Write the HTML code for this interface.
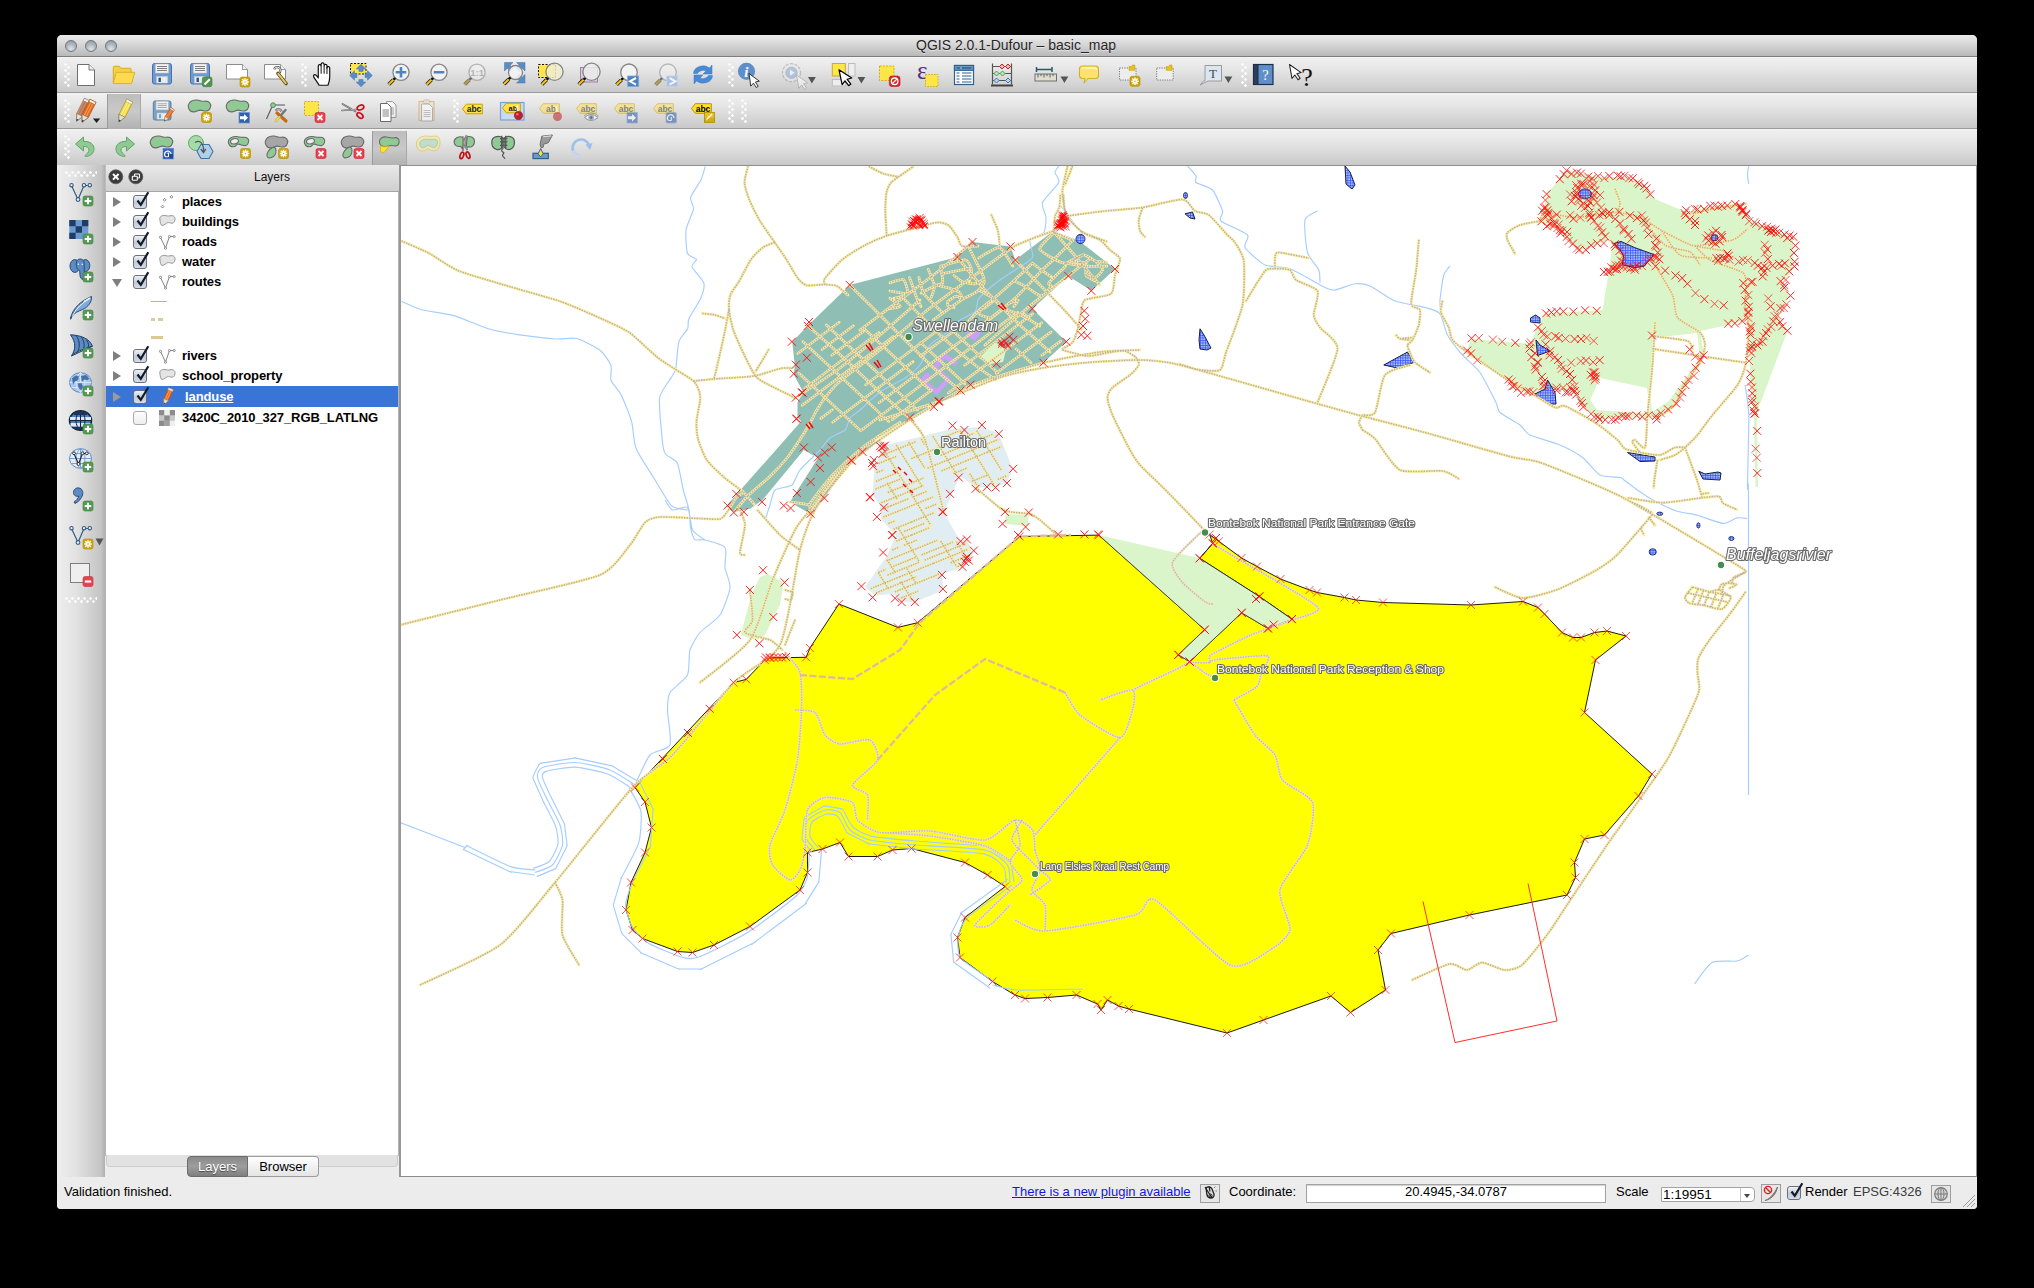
<!DOCTYPE html>
<html><head><meta charset="utf-8"><title>QGIS</title>
<style>
*{box-sizing:border-box;margin:0;padding:0}
html,body{width:2034px;height:1288px;background:#000;overflow:hidden}
body{font-family:"Liberation Sans",sans-serif;font-size:13px;color:#000;position:relative}
.abs{position:absolute}
#win{position:absolute;left:57px;top:35px;width:1920px;height:1174px;background:#ececec;border-radius:5px 5px 4px 4px;overflow:hidden}
#title{position:absolute;left:0;top:0;width:1920px;height:22px;background:linear-gradient(#ebebeb,#d6d6d6 45%,#b9b9b9);border-bottom:1px solid #7d7d7d;text-align:center;font-size:14px;line-height:21px;color:#262626;text-shadow:0 1px 0 rgba(255,255,255,.5)}
.tl{position:absolute;top:5px;width:12px;height:12px;border-radius:6px;background:radial-gradient(circle at 50% 80%,#dfe6ea 0,#b4bcc3 45%,#8d959c 100%);border:1px solid #6f767c}
.tb{position:absolute;left:0;width:1920px;height:36px;background:linear-gradient(#f0f0f0,#e7e7e7 30%,#d3d3d3 78%,#c9c9c9);border-bottom:1px solid #9a9a9a;border-top:1px solid #f4f4f4}
.grip{position:absolute;width:6px;height:24px;background-image:radial-gradient(circle at 1.5px 1.5px,#fbfbfb 1px,rgba(255,255,255,0) 1.6px),radial-gradient(circle at 4.5px 4.5px,#fbfbfb 1px,rgba(255,255,255,0) 1.6px);background-size:6px 6px}
.gripH{position:absolute;width:32px;height:6px;background-image:radial-gradient(circle at 1.5px 1.5px,#fbfbfb 1px,rgba(255,255,255,0) 1.6px),radial-gradient(circle at 4.5px 4.5px,#fbfbfb 1px,rgba(255,255,255,0) 1.6px);background-size:6px 6px}
.ic{position:absolute;width:24px;height:24px;overflow:visible}
.pressed{position:absolute;background:linear-gradient(#bdbdbd,#c9c9c9 50%,#b1b1b1);border-left:1px solid #9a9a9a;border-right:1px solid #a8a8a8}
#dock{position:absolute;left:0;top:130px;width:47.5px;height:1012px;background:linear-gradient(90deg,#eeeeee,#e2e2e2 40%,#c4c4c4 92%,#b0b0b0)}
#lhead{position:absolute;left:48px;top:130px;width:294px;height:27px;background:linear-gradient(#e9e9e9,#dcdcdc 50%,#cfcfcf);border-bottom:1px solid #a6a6a6;border-left:1px solid #bdbdbd;text-align:center;line-height:24px;font-size:12px;color:#111}
#tree{position:absolute;left:48px;top:157px;width:294px;height:964px;background:#fff;border-left:1px solid #b5b5b5;border-right:1px solid #b5b5b5;border-bottom:1px solid #b5b5b5}
.row{position:absolute;left:0;width:292px;height:20px}
.row .t{position:absolute;left:76px;top:2px;font-weight:bold;font-size:13px;line-height:16px;white-space:nowrap;color:#000;letter-spacing:-0.1px}
.arr{position:absolute;left:7px;top:5px;width:0;height:0;border-left:8px solid #7f7f7f;border-top:5px solid transparent;border-bottom:5px solid transparent}
.arrd{position:absolute;left:6px;top:7px;width:0;height:0;border-top:8px solid #7f7f7f;border-left:5px solid transparent;border-right:5px solid transparent}
.cb{position:absolute;left:27px;top:3px;width:14px;height:14px;border:1px solid #6b6f80;border-radius:3px;background:linear-gradient(#eef1f5,#c2ccd8 55%,#d5dee8)}
.cb.off{background:linear-gradient(#fdfdfd,#ededed);border-color:#a9a9a9}
.cb svg{position:absolute;left:1px;top:-5px;width:16px;height:17px;overflow:visible}
.li{position:absolute;left:53px;top:2px;width:18px;height:16px;overflow:visible}
#mapwrap{position:absolute;left:342px;top:130px;width:1578px;height:1012px;background:#fff;border:1px solid #8e8e8e;border-left:2px solid #979797;overflow:hidden}
#status{position:absolute;left:0;top:1142px;width:1920px;height:32px;background:#ececec;font-size:13px}
</style></head><body>
<div id="win">
<div id="title"><span style="position:relative;left:-1px">QGIS 2.0.1-Dufour – basic_map</span>
<div class="tl" style="left:8px"></div><div class="tl" style="left:28px"></div><div class="tl" style="left:48px"></div></div>
<div class="tb" style="top:22px"></div>
<div class="tb" style="top:58px"></div>
<div class="tb" style="top:94px;height:37px"></div>
<svg class="ic" style="left:17px;top:28px" viewBox="0 0 24 24"><path d="M3.5 1.5h11.5l5.5 5.5v15.5h-17z" fill="#fff" stroke="#6e6e6e"/><path d="M15 1.5v5.5h5.5" fill="#ececec" stroke="#6e6e6e" stroke-width=".9"/></svg>
<svg class="ic" style="left:55px;top:28px" viewBox="0 0 24 24"><path d="M1.3 20V4.2q0-.9.9-.9h5.2l1.3 2h9.5q.9 0 .9.9v3.3" fill="#f5cf48" stroke="#d2ac2c"/><path d="M1.2 20.6l3-11.3h18.6l-3.2 11.3z" fill="#ffda50" stroke="#d8b230" stroke-linejoin="round"/></svg>
<svg class="ic" style="left:93px;top:28px" viewBox="0 0 24 24"><rect x="2.5" y=".5" width="19" height="20.5" rx="2" fill="#6d9bd0" stroke="#4673ad"/><rect x="5.5" y="1" width="13" height="9" fill="#f2f2f2" stroke="#c9c9c9" stroke-width=".6"/><path d="M7 3.5h10M7 5.5h10M7 7.5h10" stroke="#6f6f6f" stroke-width=".9"/><rect x="6.5" y="13.5" width="11" height="6.5" fill="#ebebeb" stroke="#c4cbd6" stroke-width=".5"/><rect x="8.5" y="14.7" width="2.4" height="4.3" fill="#2d4f83"/></svg>
<svg class="ic" style="left:131px;top:28px" viewBox="0 0 24 24"><rect x="2.5" y=".5" width="19" height="20.5" rx="2" fill="#6d9bd0" stroke="#4673ad"/><rect x="5.5" y="1" width="13" height="9" fill="#f2f2f2" stroke="#c9c9c9" stroke-width=".6"/><path d="M7 3.5h10M7 5.5h10M7 7.5h10" stroke="#6f6f6f" stroke-width=".9"/><rect x="6.5" y="13.5" width="11" height="6.5" fill="#ebebeb" stroke="#c4cbd6" stroke-width=".5"/><rect x="8.5" y="14.7" width="2.4" height="4.3" fill="#2d4f83"/><rect x="14.3" y="14" width="9.7" height="9.7" rx="2" fill="#4e9650" stroke="#3c7a3e" stroke-width=".6"/><path d="M16.5 21.5l5.3 -5.3" stroke="#fff" stroke-width="2"/></svg>
<svg class="ic" style="left:169px;top:28px" viewBox="0 0 24 24"><path d="M.5 1.5h16l5 5v9.5h-21z" fill="#fff" stroke="#8c8c8c"/><path d="M16.5 1.5v5h5" fill="#f3f3f3" stroke="#8c8c8c" stroke-width=".9"/><rect x="14" y="14" width="10" height="10" rx="2" fill="#cfa60a" stroke="#b08c00" stroke-width=".6"/><path d="M19 15.3V22.7M15.3 19H22.7M16.3 16.3L21.7 21.7M16.3 21.7L21.7 16.3" stroke="#fff" stroke-width="1.45"/><circle cx="19" cy="19" r=".75" fill="#cfa60a"/></svg>
<svg class="ic" style="left:207px;top:28px" viewBox="0 0 24 24"><path d="M.5 1.5h16l5 5v9.5h-21z" fill="#fff" stroke="#8c8c8c"/><path d="M16.5 1.5v5h5" fill="#f3f3f3" stroke="#8c8c8c" stroke-width=".9"/><path d="M10.2 6.3a3.2 3.2 0 1 1 3.4 4.2" fill="none" stroke="#555" stroke-width="2.2"/><path d="M10.2 6.3a3.2 3.2 0 1 1 3.4 4.2" fill="none" stroke="#f2f2f2" stroke-width="1"/><path d="M14 10.5l8 10" stroke="#5a4a1a" stroke-width="3.6" stroke-linecap="round"/><path d="M14.3 10.9l7.4 9.3" stroke="#e6c85a" stroke-width="2" stroke-linecap="round"/></svg>
<svg class="ic" style="left:255px;top:28px" viewBox="0 0 24 24"><g transform="translate(-1.2 -1.4) scale(1.1)"><path d="M7.5 21.5c-1.5-3-4.5-6.5-5-8c-.4-1.4 1.2-2.2 2.4-1l1.9 2.2V4.2c0-1.9 2.6-1.9 2.6 0V2.6c0-1.9 2.7-1.9 2.7 0v1.2c0-1.8 2.6-1.8 2.6 0v2c0-1.7 2.5-1.7 2.5 0v8.5c0 3-.8 5-1.6 7.2z" fill="#fff" stroke="#111" stroke-width="1.1" stroke-linejoin="round"/><path d="M9.4 4.5v6.5M12.1 4v7M14.7 5v6.3" stroke="#111" stroke-width=".9"/></g></svg>
<svg class="ic" style="left:292px;top:28px" viewBox="0 0 24 24"><rect x="1.5" y=".5" width="15.5" height="10.5" fill="#ffe648" stroke="#111" stroke-dasharray="2 1.5"/><path d="M12 1.2l4.8 4.8h-2.7v2.5h-4.2v-2.5h-2.7z" fill="#5b8cc6" stroke="#4377b4" stroke-width=".5" transform="rotate(0 12 12.5)"/><path d="M12 1.2l4.8 4.8h-2.7v2.5h-4.2v-2.5h-2.7z" fill="#5b8cc6" stroke="#4377b4" stroke-width=".5" transform="rotate(90 12 12.5)"/><path d="M12 1.2l4.8 4.8h-2.7v2.5h-4.2v-2.5h-2.7z" fill="#5b8cc6" stroke="#4377b4" stroke-width=".5" transform="rotate(180 12 12.5)"/><path d="M12 1.2l4.8 4.8h-2.7v2.5h-4.2v-2.5h-2.7z" fill="#5b8cc6" stroke="#4377b4" stroke-width=".5" transform="rotate(270 12 12.5)"/></svg>
<svg class="ic" style="left:329px;top:28px" viewBox="0 0 24 24"><path d="M2.6724900000000016 21.52751L7.472490000000001 16.72751" stroke="#222" stroke-width="3.8" stroke-linecap="butt" opacity="1"/><path d="M2.6724900000000016 21.52751L7.472490000000001 16.72751" stroke="#f5c518" stroke-width="2" stroke-linecap="butt" opacity="1"/><circle cx="15" cy="9.2" r="8.1" fill="#f4f4f4" fill-opacity=".85" stroke="#858585" stroke-width="1.3" opacity="1"/><circle cx="8.37249" cy="15.827509999999998" r="1.4" fill="#111" opacity="1"/><path d="M15 3.9v10.6M9.7 9.2h10.6" stroke="#4f83c1" stroke-width="2.6"/></svg>
<svg class="ic" style="left:367px;top:28px" viewBox="0 0 24 24"><path d="M2.6724900000000016 21.52751L7.472490000000001 16.72751" stroke="#222" stroke-width="3.8" stroke-linecap="butt" opacity="1"/><path d="M2.6724900000000016 21.52751L7.472490000000001 16.72751" stroke="#f5c518" stroke-width="2" stroke-linecap="butt" opacity="1"/><circle cx="15" cy="9.2" r="8.1" fill="#f4f4f4" fill-opacity=".85" stroke="#858585" stroke-width="1.3" opacity="1"/><circle cx="8.37249" cy="15.827509999999998" r="1.4" fill="#111" opacity="1"/><path d="M9.7 9.2h10.6" stroke="#4f83c1" stroke-width="2.6"/></svg>
<svg class="ic" style="left:405px;top:28px" viewBox="0 0 24 24"><path d="M2.6724900000000016 21.52751L7.472490000000001 16.72751" stroke="#222" stroke-width="3.8" stroke-linecap="butt" opacity="0.55"/><path d="M2.6724900000000016 21.52751L7.472490000000001 16.72751" stroke="#f5c518" stroke-width="2" stroke-linecap="butt" opacity="0.55"/><circle cx="15" cy="9.2" r="8.1" fill="#f4f4f4" fill-opacity=".85" stroke="#858585" stroke-width="1.3" opacity="0.55"/><circle cx="8.37249" cy="15.827509999999998" r="1.4" fill="#111" opacity="0.55"/><text x="15.1" y="12.6" font-family="Liberation Sans" font-weight="bold" font-size="9.5" text-anchor="middle" fill="#b3b3b3">1:1</text></svg>
<svg class="ic" style="left:444px;top:28px" viewBox="0 0 24 24"><path d="M3.5 -.5h8.5l-2.8 2.8 3 3-2.9 2.9-3-3-2.8 2.8zM24 -.5v8.5l-2.8-2.8-3 3-2.9-2.9 3-3-2.8-2.8zM24 20v-8.5l-2.8 2.8-3-3-2.9 2.9 3 3-2.8 2.8z" fill="#5b8cc6" stroke="#3f72b0" stroke-width=".5"/><path d="M2.9503000000000004 21.0497L7.7503 16.2497" stroke="#222" stroke-width="3.8" stroke-linecap="butt" opacity="1"/><path d="M2.9503000000000004 21.0497L7.7503 16.2497" stroke="#f5c518" stroke-width="2" stroke-linecap="butt" opacity="1"/><circle cx="14.5" cy="9.5" r="7" fill="#f4f4f4" fill-opacity=".85" stroke="#858585" stroke-width="1.3" opacity="1"/><circle cx="8.6503" cy="15.3497" r="1.4" fill="#111" opacity="1"/></svg>
<svg class="ic" style="left:482px;top:28px" viewBox="0 0 24 24"><rect x="-.5" y="1.5" width="17" height="13" fill="#ffe648" stroke="#111" stroke-dasharray="2 1.5"/><path d="M2.8189400000000013 21.48106L7.618940000000001 16.68106" stroke="#222" stroke-width="3.8" stroke-linecap="butt" opacity="1"/><path d="M2.8189400000000013 21.48106L7.618940000000001 16.68106" stroke="#f5c518" stroke-width="2" stroke-linecap="butt" opacity="1"/><circle cx="15.5" cy="8.8" r="8.6" fill="#efeccf" fill-opacity=".85" stroke="#858585" stroke-width="1.3" opacity="1"/><circle cx="8.51894" cy="15.78106" r="1.4" fill="#111" opacity="1"/></svg>
<svg class="ic" style="left:519px;top:28px" viewBox="0 0 24 24"><rect x="4.5" y="4.5" width="17" height="14.5" fill="#d9c9dc" stroke="#9b879e"/><path d="M2.8189400000000013 21.48106L7.618940000000001 16.68106" stroke="#222" stroke-width="3.8" stroke-linecap="butt" opacity="1"/><path d="M2.8189400000000013 21.48106L7.618940000000001 16.68106" stroke="#f5c518" stroke-width="2" stroke-linecap="butt" opacity="1"/><circle cx="15.5" cy="8.8" r="8.6" fill="#ececec" fill-opacity=".85" stroke="#858585" stroke-width="1.3" opacity="1"/><circle cx="8.51894" cy="15.78106" r="1.4" fill="#111" opacity="1"/></svg>
<svg class="ic" style="left:557px;top:28px" viewBox="0 0 24 24"><path d="M2.5310700000000015 21.768929999999997L7.331070000000001 16.96893" stroke="#222" stroke-width="3.8" stroke-linecap="butt" opacity="1"/><path d="M2.5310700000000015 21.768929999999997L7.331070000000001 16.96893" stroke="#f5c518" stroke-width="2" stroke-linecap="butt" opacity="1"/><circle cx="15" cy="9.3" r="8.3" fill="#f4f4f4" fill-opacity=".85" stroke="#858585" stroke-width="1.3" opacity="1"/><circle cx="8.23107" cy="16.068929999999998" r="1.4" fill="#111" opacity="1"/><rect x="13.7" y="13" width="11" height="10.5" fill="#4c82c3" stroke="#7fa8d8" stroke-width=".8"/><path d="M22 15l-6 3.3 6 3.3" fill="none" stroke="#fff" stroke-width="2"/></svg>
<svg class="ic" style="left:596px;top:28px" viewBox="0 0 24 24"><path d="M2.5310700000000015 21.768929999999997L7.331070000000001 16.96893" stroke="#222" stroke-width="3.8" stroke-linecap="butt" opacity="0.5"/><path d="M2.5310700000000015 21.768929999999997L7.331070000000001 16.96893" stroke="#f5c518" stroke-width="2" stroke-linecap="butt" opacity="0.5"/><circle cx="15" cy="9.3" r="8.3" fill="#f4f4f4" fill-opacity=".85" stroke="#858585" stroke-width="1.3" opacity="0.5"/><circle cx="8.23107" cy="16.068929999999998" r="1.4" fill="#111" opacity="0.5"/><rect x="13.7" y="13" width="11" height="10.5" fill="#a9c0de" stroke="#c3d3e8" stroke-width=".8"/><path d="M16.5 15l6 3.3-6 3.3" fill="none" stroke="#eef3fa" stroke-width="2"/></svg>
<svg class="ic" style="left:634px;top:28px" viewBox="0 0 24 24"><path d="M2.5 10.5a9.5 8 0 0 1 16-5.5l2.5-3v9h-9l3-3a6 5 0 0 0-8.5 2.5z" fill="#4a8ad4" stroke="#3a78c0" stroke-width=".5"/><path d="M21.5 12.5a9.5 8 0 0 1-16 5.5l-2.5 3v-9h9l-3 3a6 5 0 0 0 8.5-2.5z" fill="#4a8ad4" stroke="#3a78c0" stroke-width=".5"/></svg>
<svg class="ic" style="left:681px;top:28px" viewBox="0 0 24 24"><circle cx="8.5" cy="8.3" r="8.2" fill="#5e8fcb" stroke="#4a7ab8" stroke-width=".6"/><text x="8.3" y="13.5" font-family="Liberation Serif" font-style="italic" font-weight="bold" font-size="15" text-anchor="middle" fill="#fff">i</text><g transform="translate(11 10.5) rotate(-8) scale(.95)"><path d="M0 0l0 13.5l3.2 -2.8l2.3 5l2.2 -1l-2.3 -4.9l4.2 -.3z" fill="#fff" stroke="#222" stroke-width="0.9" stroke-linejoin="round"/></g></svg>
<svg class="ic" style="left:724px;top:28px" viewBox="0 0 24 24"><g opacity=".5"><circle cx="10.5" cy="9.7" r="9" fill="#e9e9e9" stroke="#9a9a9a" stroke-dasharray="3.2 1.3" stroke-width="1.3"/><circle cx="10.5" cy="9.7" r="5.6" fill="#7da7da" stroke="#7b8fa8"/><path d="M9 6.8l4.7 2.9-4.7 2.9z" fill="#fff"/><g transform="translate(15.5 12) rotate(-10)"><path d="M0 0l0 13.5l3.2 -2.8l2.3 5l2.2 -1l-2.3 -4.9l4.2 -.3z" fill="#fff" stroke="#888" stroke-width="0.8" stroke-linejoin="round"/></g></g><path d="M27 14h7.8l-3.9 6.6z" fill="#555"/></svg>
<svg class="ic" style="left:775px;top:28px" viewBox="0 0 24 24"><rect x=".3" y=".5" width="13" height="12.5" fill="#ffe648" stroke="#c9ab28"/><rect x="16.5" y=".5" width="6.5" height="12.5" fill="#eee" stroke="#bdbdbd"/><rect x=".3" y="16.5" width="13" height="6.5" fill="#eee" stroke="#bdbdbd"/><g transform="translate(7 6.8) rotate(-12) scale(1.12)"><path d="M0 0l0 13.5l3.2 -2.8l2.3 5l2.2 -1l-2.3 -4.9l4.2 -.3z" fill="#fff" stroke="#000" stroke-width="1.1" stroke-linejoin="round"/></g><path d="M25.5 14h7.8l-3.9 6.6z" fill="#555"/></svg>
<svg class="ic" style="left:820px;top:28px" viewBox="0 0 24 24"><rect x="2.5" y="3" width="14.5" height="14.5" fill="#ffe648" stroke="#cfae1e" stroke-dasharray="2 1.3"/><rect x="12.3" y="13" width="10.7" height="10.5" rx="2.5" fill="#e0202e" stroke="#c01020" stroke-width=".6"/><circle cx="17.6" cy="18.3" r="3.3" fill="none" stroke="#fff" stroke-width="1.3"/><path d="M15.4 20.5l4.4-4.4" stroke="#fff" stroke-width="1.3"/></svg>
<svg class="ic" style="left:858px;top:28px" viewBox="0 0 24 24"><text x="7.2" y="15.8" font-family="Liberation Serif" font-size="25" text-anchor="middle" fill="#5b2f7a">ε</text><rect x="10.5" y="11.5" width="12.5" height="12" fill="#ffe648" stroke="#cfae1e" stroke-dasharray="1.6 1.2"/></svg>
<svg class="ic" style="left:895px;top:28px" viewBox="0 0 24 24"><rect x="2.5" y="2.5" width="19" height="19" fill="#fff" stroke="#2f5f8d" stroke-width="1.2"/><rect x="2.5" y="2.5" width="19" height="4.8" fill="#6fa0cf" stroke="#2f5f8d" stroke-width="1.2"/><path d="M4.5 5h3.5M10 5h9.5" stroke="#2f5f8d" stroke-width="1.5"/><path d="M4.5 10h3M10 10h9.5M4.5 13h3M10 13h9.5M4.5 16h3M10 16h9.5M4.5 19h3M10 19h9.5" stroke="#2f5f8d" stroke-width="1.1"/></svg>
<svg class="ic" style="left:933px;top:28px" viewBox="0 0 24 24"><path d="M2.5 .5v21M21.5 .5v21M1 22.5h22M2.5 3.5h19M2.5 10.5h19M2.5 17.5h19" stroke="#555" stroke-width="1.2" fill="none"/><path d="M1 22.5h22" stroke="#444" stroke-width="2"/><g stroke-width="1"><path d="M12 1l2.5 2.5-2.5 2.5-2.5-2.5zM18 1l2.5 2.5-2.5 2.5-2.5-2.5z" fill="#f7b6b6" stroke="#d02020"/><path d="M6.5 8l2.5 2.5-2.5 2.5-2.5-2.5zM12.5 8l2.5 2.5-2.5 2.5-2.5-2.5z" fill="#bfe3bf" stroke="#4da04d"/><path d="M6.5 15l2.5 2.5-2.5 2.5-2.5-2.5zM18 15l2.5 2.5-2.5 2.5-2.5-2.5z" fill="#bcd4ee" stroke="#3d78b8"/></g></svg>
<svg class="ic" style="left:977px;top:28px" viewBox="0 0 24 24"><path d="M2.5 6.5h15.5M2.5 4v5M18 4v5" stroke="#28557f" stroke-width="1.5" fill="none"/><rect x="1" y="11" width="21.5" height="7" fill="#dedfd0" stroke="#6f6f6f"/><path d="M4 11v3.5M7 11v2.2M10 11v3.5M13 11v2.2M16 11v3.5M19 11v2.2" stroke="#555" stroke-width=".9"/><path d="M26.5 13.5h7.8l-3.9 6.6z" fill="#555"/></svg>
<svg class="ic" style="left:1021px;top:28px" viewBox="0 0 24 24"><g transform="translate(0 1.5)"><path d="M4.5 1.5h13q3 0 3 3v6.5q0 3-3 3h-7.5l-4 4.5l1-4.5h-2.5q-3 0-3-3v-6.5q0-3 3-3z" fill="#fde36a" stroke="#d3b02c" stroke-width="1.1" stroke-linejoin="round"/><path d="M4 3.5h12q2 0 2.5 1.5" stroke="#fff5b8" stroke-width="1.5" fill="none" stroke-linecap="round"/></g></svg>
<svg class="ic" style="left:1061px;top:28px" viewBox="0 0 24 24"><rect x="1.5" y="5" width="16.5" height="12" fill="#ededed" stroke="#777" stroke-dasharray="1.2 1.2"/><path d="M11 3.6h2.5l.9-1.5h2.4v5.2h-5.8z" fill="#e8c21e" stroke="#c8a000" stroke-width=".6"/><rect x="12" y="13.3" width="10" height="10" rx="2" fill="#cfa60a" stroke="#b08c00" stroke-width=".6"/><path d="M17 14.600000000000001V22.0M13.3 18.3H20.7M14.3 15.600000000000001L19.7 21.0M14.3 21.0L19.7 15.600000000000001" stroke="#fff" stroke-width="1.45"/><circle cx="17" cy="18.3" r=".75" fill="#cfa60a"/></svg>
<svg class="ic" style="left:1096px;top:28px" viewBox="0 0 24 24"><rect x="3.7" y="5" width="16.5" height="12" fill="#ededed" stroke="#777" stroke-dasharray="1.2 1.2"/><path d="M13.2 3.6h2.5l.9-1.5h2.4v5.2h-5.8z" fill="#e8c21e" stroke="#c8a000" stroke-width=".6"/></svg>
<svg class="ic" style="left:1143px;top:28px" viewBox="0 0 24 24"><path d="M5 2.5h16.5v15.5h-13.5l-8 4l3.5-4h1.5z" fill="#dbe7f0" stroke="#9a9a9a" stroke-linejoin="round"/><text x="13" y="14.5" font-family="Liberation Serif" font-size="13" text-anchor="middle" fill="#444">T</text><path d="M24.5 13.5h7.8l-3.9 6.6z" fill="#555"/></svg>
<svg class="ic" style="left:1194px;top:28px" viewBox="0 0 24 24"><rect x="2.5" y="1.5" width="19.5" height="20" fill="#5e8fcb" stroke="#1f2f48" stroke-width="1.2"/><rect x="2.5" y="1.5" width="4.5" height="20" fill="#2c3e5c" stroke="#1f2f48"/><text x="14.5" y="16.5" font-family="Liberation Serif" font-size="14.5" text-anchor="middle" fill="#fff">?</text></svg>
<svg class="ic" style="left:1231px;top:28px" viewBox="0 0 24 24"><g transform="translate(1.5 1.5) rotate(-10) scale(1.05)"><path d="M0 0l0 13.5l3.2 -2.8l2.3 5l2.2 -1l-2.3 -4.9l4.2 -.3z" fill="#fff" stroke="#222" stroke-width="1" stroke-linejoin="round"/></g><text x="19" y="22.5" font-family="Liberation Serif" font-size="26" text-anchor="middle" fill="#111">?</text></svg>
<div class="grip" style="left:7px;top:28px;height:24px"></div>
<div class="grip" style="left:244px;top:28px;height:24px"></div>
<div class="grip" style="left:671px;top:28px;height:24px"></div>
<div class="grip" style="left:1184px;top:28px;height:24px"></div>
<div class="pressed" style="left:50px;top:59px;width:34px;height:35px"></div>
<svg class="ic" style="left:18px;top:64px" viewBox="0 0 24 24"><g transform="translate(7 11.5) rotate(27) scale(1)"><path d="M-3.4 -12h6.8v17l-3.4 7l-3.4-7z" fill="#c98a66" stroke="#9a7a6a" stroke-width=".7"/><path d="M-3.4 -12h6.8v2.6h-6.8z" fill="#f6f6f6" stroke="#9a7a6a" stroke-width=".6"/><path d="M-1.15 -9.4v14.4M1.15 -9.4v14.4" stroke="#b5764f" stroke-width="1.1"/><path d="M-3.4 5l3.4 7l3.4-7z" fill="#e6e0d6" stroke="#777" stroke-width=".6"/><path d="M-1.1 9.7l1.1 2.3l1.1-2.3z" fill="#333"/></g><g transform="translate(12.5 12.5) rotate(27) scale(1)"><path d="M-3.4 -12h6.8v17l-3.4 7l-3.4-7z" fill="#e8662a" stroke="#a8541e" stroke-width=".7"/><path d="M-3.4 -12h6.8v2.6h-6.8z" fill="#f6f6f6" stroke="#a8541e" stroke-width=".6"/><path d="M-1.15 -9.4v14.4M1.15 -9.4v14.4" stroke="#f2a040" stroke-width="1.1"/><path d="M-3.4 5l3.4 7l3.4-7z" fill="#e6e0d6" stroke="#777" stroke-width=".6"/><path d="M-1.1 9.7l1.1 2.3l1.1-2.3z" fill="#333"/></g><path d="M18 19.5h7.2l-3.6 4.5z" fill="#222"/></svg>
<svg class="ic" style="left:55px;top:64px" viewBox="0 0 24 24"><g transform="translate(12.3 12.3) rotate(27) scale(1)"><path d="M-3.4 -12h6.8v17l-3.4 7l-3.4-7z" fill="#f2d944" stroke="#a89a30" stroke-width=".7"/><path d="M-3.4 -12h6.8v2.6h-6.8z" fill="#f6f6f6" stroke="#a89a30" stroke-width=".6"/><path d="M-1.15 -9.4v14.4M1.15 -9.4v14.4" stroke="#fff08a" stroke-width="1.1"/><path d="M-3.4 5l3.4 7l3.4-7z" fill="#e6e0d6" stroke="#777" stroke-width=".6"/><path d="M-1.1 9.7l1.1 2.3l1.1-2.3z" fill="#333"/></g></svg>
<svg class="ic" style="left:93px;top:64px" viewBox="0 0 24 24"><g transform="translate(1 1.5) scale(.93)"><rect x="2.5" y=".5" width="19" height="20.5" rx="2" fill="#7aa3c6" stroke="#4f7a9d"/><rect x="5.5" y="1" width="13" height="9" fill="#f2f2f2" stroke="#c9c9c9" stroke-width=".6"/><path d="M7 3.5h10M7 5.5h10M7 7.5h10" stroke="#9a9a9a" stroke-width=".9"/><rect x="6.5" y="13.5" width="11" height="6.5" fill="#ebebeb" stroke="#c4cbd6" stroke-width=".5"/><rect x="8.5" y="14.7" width="2.4" height="4.3" fill="#7aa3c6"/></g><g transform="translate(18.5 16) rotate(33) scale(0.62)"><path d="M-3.4 -12h6.8v17l-3.4 7l-3.4-7z" fill="#e8662a" stroke="#a8541e" stroke-width=".7"/><path d="M-3.4 -12h6.8v2.6h-6.8z" fill="#f6f6f6" stroke="#a8541e" stroke-width=".6"/><path d="M-1.15 -9.4v14.4M1.15 -9.4v14.4" stroke="#f2a040" stroke-width="1.1"/><path d="M-3.4 5l3.4 7l3.4-7z" fill="#e6e0d6" stroke="#777" stroke-width=".6"/><path d="M-1.1 9.7l1.1 2.3l1.1-2.3z" fill="#333"/></g></svg>
<svg class="ic" style="left:131px;top:64px" viewBox="0 0 24 24"><path d="M1 10c-2.3-4.5 1.5-9.5 8-9c3.2 .3 4.3 1.7 7.5 1.2c4.3-.7 7 2.2 6 6c-.9 3.3-3.6 4.5-7 3.5c-2.6-.8-3.7-1-5.8 0c-3.4 1.7-7 1.7-8.7-1.7z" fill="#8fca94" stroke="#6a6a6a" stroke-width="1.1"/><rect x="13.5" y="13.5" width="10" height="10" rx="2" fill="#cfa60a" stroke="#b08c00" stroke-width=".6"/><path d="M18.5 14.8V22.2M14.8 18.5H22.2M15.8 15.8L21.2 21.2M15.8 21.2L21.2 15.8" stroke="#fff" stroke-width="1.45"/><circle cx="18.5" cy="18.5" r=".75" fill="#cfa60a"/></svg>
<svg class="ic" style="left:169px;top:64px" viewBox="0 0 24 24"><path d="M1 10c-2.3-4.5 1.5-9.5 8-9c3.2 .3 4.3 1.7 7.5 1.2c4.3-.7 7 2.2 6 6c-.9 3.3-3.6 4.5-7 3.5c-2.6-.8-3.7-1-5.8 0c-3.4 1.7-7 1.7-8.7-1.7z" fill="#8fca94" stroke="#6a6a6a" stroke-width="1.1"/><rect x="13" y="13.5" width="10.5" height="10.5" fill="#2f5fad" stroke="#6f95d0" stroke-width=".8"/><path d="M14 17.3h4v-2.3l4 3.8l-4 3.8v-2.3h-4z" fill="#fff"/></svg>
<svg class="ic" style="left:208px;top:64px" viewBox="0 0 24 24"><path d="M1.5 20l6-13.5" stroke="#555" stroke-width="1.1"/><path d="M8 6h12" stroke="#555" stroke-width="1.1"/><circle cx="8" cy="6.2" r="2.4" fill="#8fca94" stroke="#5a8a5e"/><path d="M10.5 12c2-3 6-2 6 1" fill="none" stroke="#666" stroke-width="2.2"/><path d="M10.5 12c2-3 6-2 6 1" fill="none" stroke="#ddd" stroke-width=".9"/><path d="M12 14l9 8" stroke="#c86a10" stroke-width="3.2" stroke-linecap="round"/><path d="M20.5 11l-9.5 11" stroke="#777" stroke-width="2.4" stroke-linecap="round"/><path d="M14.5 18l-3.5 4" stroke="#e8de3a" stroke-width="2" stroke-linecap="round"/></svg>
<svg class="ic" style="left:246px;top:64px" viewBox="0 0 24 24"><rect x="1.5" y="2.5" width="14" height="14" fill="#ffe648" stroke="#cfae1e" stroke-dasharray="2 1.3"/><rect x="12" y="13.5" width="10" height="10" rx="2" fill="#e8414f" stroke="#c8202e" stroke-width=".6"/><path d="M14.5 16.0l5 5m0 -5l-5 5" stroke="#fff" stroke-width="1.8"/></svg>
<svg class="ic" style="left:284px;top:64px" viewBox="0 0 24 24"><path d="M1.5 5l13 7.5M1 11.5l14-1" stroke="#555" stroke-width="1.7" stroke-linecap="round"/><path d="M1.5 5l13 7.5M1 11.5l14-1" stroke="#d8d8d8" stroke-width=".6" stroke-linecap="round"/><ellipse cx="19.5" cy="8.5" rx="3.5" ry="2.2" transform="rotate(-25 19.5 8.5)" fill="none" stroke="#c81420" stroke-width="1.7"/><ellipse cx="19" cy="16.5" rx="3.5" ry="2.2" transform="rotate(40 19 16.5)" fill="none" stroke="#c81420" stroke-width="1.7"/></svg>
<svg class="ic" style="left:320px;top:64px" viewBox="0 0 24 24"><g opacity=".6"><path d="M9.5 2.5h6l3.5 3.5v12.5h-9.5z" fill="#fff" stroke="#6a6a6a" stroke-width="1"/><path d="M11.5 9.0h5.5M11.5 11.0h5.5M11.5 13.0h5.5M11.5 15.0h5.5" stroke="#777" stroke-width=".9"/></g><path d="M3.5 4.5h7l3.5 3.5v14.5h-10.5z" fill="#fff" stroke="#6a6a6a" stroke-width="1"/><path d="M5.5 11.0h6.5M5.5 13.0h6.5M5.5 15.0h6.5M5.5 17.0h6.5" stroke="#777" stroke-width=".9"/></svg>
<svg class="ic" style="left:359px;top:64px" viewBox="0 0 24 24"><g opacity=".55"><rect x="3" y="2.5" width="15" height="19" fill="#f0dcc4" stroke="#c89a5a" stroke-width="1.1"/><rect x="7.5" y="1" width="6" height="3.5" rx="1" fill="#ead6bc" stroke="#c89a5a"/><path d="M5.5 5h7.5l3.5 3.5v13.5h-11.0z" fill="#fff" stroke="#8a8a8a" stroke-width="1"/><path d="M7.5 11.5h7.0M7.5 13.5h7.0M7.5 15.5h7.0M7.5 17.5h7.0" stroke="#999" stroke-width=".9"/></g></svg>
<svg class="ic" style="left:405px;top:64px" viewBox="0 0 24 24"><path d="M0.5 10l3.8-4.8h16v9.6h-16z" fill="#ffe24a" stroke="#c8a000" stroke-width="1" stroke-linejoin="round"/><text x="12.0" y="13" font-family="Liberation Sans" font-weight="bold" font-size="8.5" text-anchor="middle" fill="#222">abc</text></svg>
<svg class="ic" style="left:444px;top:64px" viewBox="0 0 24 24"><rect x="-.5" y="3.5" width="23.5" height="17.5" fill="#c9d9ee" stroke="#79a3dc" stroke-width="1.2"/><path d="M1.5 9l3.8-4.8h14v9.6h-14z" fill="#ffe24a" stroke="#c8a000" stroke-width="1" stroke-linejoin="round"/><text x="12.0" y="12" font-family="Liberation Sans" font-weight="bold" font-size="7.5" text-anchor="middle" fill="#222">ab</text><path d="M16 7.5l1.5 7" stroke="#eee" stroke-width="1.8" stroke-linecap="round"/><circle cx="17.5" cy="16.5" r="4.2" fill="#c0202c" stroke="#8a1018" stroke-width=".5"/><circle cx="16.3" cy="15.2" r="1.2" fill="#e8707a"/></svg>
<svg class="ic" style="left:482px;top:64px" viewBox="0 0 24 24"><g opacity="0.5"><path d="M0.5 9.5l3.8-4.8h16v9.6h-16z" fill="#ffe24a" stroke="#c8a000" stroke-width="1" stroke-linejoin="round"/><text x="12.0" y="12.5" font-family="Liberation Sans" font-weight="bold" font-size="8.5" text-anchor="middle" fill="#222">ab</text></g><g opacity=".55"><path d="M17 8l1 7" stroke="#fff" stroke-width="1.8" stroke-linecap="round"/><circle cx="18.5" cy="17.5" r="4.5" fill="#c0202c"/></g></svg>
<svg class="ic" style="left:519px;top:64px" viewBox="0 0 24 24"><g opacity="0.5"><path d="M0.5 9.5l3.8-4.8h16v9.6h-16z" fill="#ffe24a" stroke="#c8a000" stroke-width="1" stroke-linejoin="round"/><text x="12.0" y="12.5" font-family="Liberation Sans" font-weight="bold" font-size="8.5" text-anchor="middle" fill="#222">abc</text></g><g opacity=".6"><path d="M8.5 18.5q6.5-6 13.5 0q-7 6-13.5 0z" fill="#fff" stroke="#555" stroke-width=".9"/><circle cx="15.2" cy="18.5" r="2.8" fill="#6a9ad8"/><circle cx="15.2" cy="18.5" r="1.2" fill="#222"/><path d="M8 17q7-6.5 14.5 0" fill="none" stroke="#666" stroke-width=".8"/></g></svg>
<svg class="ic" style="left:557px;top:64px" viewBox="0 0 24 24"><g opacity="0.5"><path d="M0.5 9.5l3.8-4.8h16v9.6h-16z" fill="#ffe24a" stroke="#c8a000" stroke-width="1" stroke-linejoin="round"/><text x="12.0" y="12.5" font-family="Liberation Sans" font-weight="bold" font-size="8.5" text-anchor="middle" fill="#222">abc</text></g><g opacity=".55"><rect x="13" y="13.5" width="10.5" height="10.5" fill="#2f5fad" stroke="#6f95d0" stroke-width=".8"/><path d="M14 17.3h4v-2.3l4 3.8l-4 3.8v-2.3h-4z" fill="#fff"/></g></svg>
<svg class="ic" style="left:596px;top:64px" viewBox="0 0 24 24"><g opacity="0.5"><path d="M0.5 9.5l3.8-4.8h16v9.6h-16z" fill="#ffe24a" stroke="#c8a000" stroke-width="1" stroke-linejoin="round"/><text x="12.0" y="12.5" font-family="Liberation Sans" font-weight="bold" font-size="8.5" text-anchor="middle" fill="#222">abc</text></g><g opacity=".55"><rect x="13" y="13.5" width="10.5" height="10.5" rx="1.5" fill="#2f5fad" stroke="#6f95d0" stroke-width=".8"/><path d="M15.5 21.5a3.3 3.3 0 1 1 5.5-2.5" fill="none" stroke="#fff" stroke-width="1.2"/><path d="M18.3 18v3.5h-2.5" fill="none" stroke="#fff" stroke-width="1"/></g></svg>
<svg class="ic" style="left:634px;top:64px" viewBox="0 0 24 24"><path d="M0.5 9.5l3.8-4.8h16v9.6h-16z" fill="#ffe030" stroke="#b89400" stroke-width="1" stroke-linejoin="round"/><text x="12.0" y="12.5" font-family="Liberation Sans" font-weight="bold" font-size="8.5" text-anchor="middle" fill="#000">abc</text><rect x="13.5" y="13.5" width="10" height="10" fill="#d4ac10" stroke="#b08c00" stroke-width=".8"/><path d="M14 13.8h9.2v5l-9.2 0z" fill="#e8c83a" opacity=".7"/><path d="M21.5 15.5l-4.5 4.5l-2 1.5l1-2.5l4.5-4.5z" fill="#fff"/></svg>
<div class="grip" style="left:7px;top:64px;height:24px"></div>
<div class="grip" style="left:396px;top:64px;height:24px"></div>
<div class="grip" style="left:671px;top:64px;height:24px"></div>
<div class="grip" style="left:684px;top:64px;height:24px"></div>
<div class="pressed" style="left:315px;top:96px;width:35px;height:35px"></div>
<svg class="ic" style="left:17px;top:100px" viewBox="0 0 24 24"><path d="M1.5 9l8-7v4.3c7 0 10.5 3.2 10.5 7.7c0 4-3 6.5-7.5 7.5c-1.5.3-2-.5-1.2-1.3c1.5-1.5 3.7-2.7 3.7-5.2c0-2.5-2.5-3.5-5.5-3.5v4.5z" fill="#8fc993" stroke="#5fa565" stroke-width="1" stroke-linejoin="round"/></svg>
<svg class="ic" style="left:55px;top:100px" viewBox="0 0 24 24"><path d="M22.5 9l-8-7v4.3c-7 0-10.5 3.2-10.5 7.7c0 4 3 6.5 7.5 7.5c1.5.3 2-.5 1.2-1.3c-1.5-1.5-3.7-2.7-3.7-5.2c0-2.5 2.5-3.5 5.5-3.5v4.5z" fill="#8fc993" stroke="#5fa565" stroke-width="1" stroke-linejoin="round"/></svg>
<svg class="ic" style="left:93px;top:100px" viewBox="0 0 24 24"><path d="M1 10c-2.3-4.5 1.5-9.5 8-9c3.2 .3 4.3 1.7 7.5 1.2c4.3-.7 7 2.2 6 6c-.9 3.3-3.6 4.5-7 3.5c-2.6-.8-3.7-1-5.8 0c-3.4 1.7-7 1.7-8.7-1.7z" fill="#8fca94" stroke="#6a6a6a" stroke-width="1.1"/><rect x="13" y="13.5" width="10.5" height="10.5" fill="#1f4a9a" stroke="#6f95d0" stroke-width=".7"/><path d="M13.3 13.8h9.9v5.2h-9.9z" fill="#3a68b8"/><path d="M15.8 22a3.3 3.3 0 1 1 5.3-3" fill="none" stroke="#fff" stroke-width="1.2"/><path d="M18.5 18v3.8h-2.8" fill="none" stroke="#fff" stroke-width="1"/><circle cx="18.3" cy="18.3" r=".9" fill="#fff"/></svg>
<svg class="ic" style="left:131px;top:100px" viewBox="0 0 24 24"><circle cx="8" cy="8" r="7.5" fill="#a4dba6" stroke="#6aa86e"/><path d="M13 9.5l8 0l4 7l-4 7h-8l-4-7z" fill="#b0d0ea" stroke="#3f74a6" stroke-width="1.1" stroke-linejoin="round"/><path d="M7 7.5c5-3 9 1 8.5 9" fill="none" stroke="#555" stroke-width="1.3"/><path d="M12.8 14l2.7 3.5l2.3-3.7" fill="none" stroke="#555" stroke-width="1.3"/></svg>
<svg class="ic" style="left:170px;top:100px" viewBox="0 0 24 24"><path d="M1.5 8c-1-4 3-7 8-6.5c3 .3 4.5 1 7 .8c4-.3 6 2 5 5c-.8 2.5-3 3.8-6 3c-2-.5-3-1.8-5-1c-1.5.6-1.5 2.3-4 2.5c-2.5.2-4.3-1.5-5-3.8z" fill="#8fca94" stroke="#6a6a6a" stroke-width="1.1"/><ellipse cx="7.5" cy="6.3" rx="4" ry="2.6" transform="rotate(-12 7.5 6.3)" fill="#ececec" stroke="#6a6a6a" stroke-width="1.1"/><rect x="13.5" y="13.5" width="10" height="10" rx="2" fill="#cfa60a" stroke="#b08c00" stroke-width=".6"/><path d="M18.5 14.8V22.2M14.8 18.5H22.2M15.8 15.8L21.2 21.2M15.8 21.2L21.2 15.8" stroke="#fff" stroke-width="1.45"/><circle cx="18.5" cy="18.5" r=".75" fill="#cfa60a"/></svg>
<svg class="ic" style="left:208px;top:100px" viewBox="0 0 24 24"><path d="M1 10c-2.3-4.5 1.5-9.5 8-9c3.2 .3 4.3 1.7 7.5 1.2c4.3-.7 7 2.2 6 6c-.9 3.3-3.6 4.5-7 3.5c-2.6-.8-3.7-1-5.8 0c-3.4 1.7-7 1.7-8.7-1.7z" fill="#a6a6a6" stroke="#6a6a6a" stroke-width="1.1"/><path d="M2 21c-.5-3 2-7 5.5-8.5c2-.8 3.5.5 3.5 3c0 3-1.5 6-4.5 7c-2.5.8-4.2.2-4.5-1.5z" fill="#8fca94" stroke="#6a6a6a" stroke-width="1.1"/><rect x="13.5" y="13.5" width="10" height="10" rx="2" fill="#cfa60a" stroke="#b08c00" stroke-width=".6"/><path d="M18.5 14.8V22.2M14.8 18.5H22.2M15.8 15.8L21.2 21.2M15.8 21.2L21.2 15.8" stroke="#fff" stroke-width="1.45"/><circle cx="18.5" cy="18.5" r=".75" fill="#cfa60a"/></svg>
<svg class="ic" style="left:246px;top:100px" viewBox="0 0 24 24"><path d="M1.5 8c-1-4 3-7 8-6.5c3 .3 4.5 1 7 .8c4-.3 6 2 5 5c-.8 2.5-3 3.8-6 3c-2-.5-3-1.8-5-1c-1.5.6-1.5 2.3-4 2.5c-2.5.2-4.3-1.5-5-3.8z" fill="#8fca94" stroke="#6a6a6a" stroke-width="1.1"/><ellipse cx="7.5" cy="6.3" rx="4" ry="2.6" transform="rotate(-12 7.5 6.3)" fill="#ececec" stroke="#6a6a6a" stroke-width="1.1"/><rect x="13" y="13.5" width="10" height="10" rx="2" fill="#e8414f" stroke="#c8202e" stroke-width=".6"/><path d="M15.5 16.0l5 5m0 -5l-5 5" stroke="#fff" stroke-width="1.8"/></svg>
<svg class="ic" style="left:284px;top:100px" viewBox="0 0 24 24"><path d="M1 10c-2.3-4.5 1.5-9.5 8-9c3.2 .3 4.3 1.7 7.5 1.2c4.3-.7 7 2.2 6 6c-.9 3.3-3.6 4.5-7 3.5c-2.6-.8-3.7-1-5.8 0c-3.4 1.7-7 1.7-8.7-1.7z" fill="#a6a6a6" stroke="#6a6a6a" stroke-width="1.1"/><path d="M2 21c-.5-3 2-7 5.5-8.5c2-.8 3.5.5 3.5 3c0 3-1.5 6-4.5 7c-2.5.8-4.2.2-4.5-1.5z" fill="#8fca94" stroke="#6a6a6a" stroke-width="1.1"/><rect x="13" y="13.5" width="10" height="10" rx="2" fill="#e8414f" stroke="#c8202e" stroke-width=".6"/><path d="M15.5 16.0l5 5m0 -5l-5 5" stroke="#fff" stroke-width="1.8"/></svg>
<svg class="ic" style="left:321px;top:100px" viewBox="0 0 24 24"><path d="M1.5 6.5c0-3 3-5 7-4.5c3 .4 4.5 1.5 7.5.8c3.5-.8 6 1.5 5 5c-.7 2.5-2.5 3.5-5 3c-2-.4-3-.6-5 0c-1.5.5-3 1.5-5.5.8c-2.5-.7-4-2.6-4-5.1z" fill="#8fca94" stroke="#6a6a6a" stroke-width="1.1"/><path d="M2.5 10.5c2.5 1.8 5 1.3 7.5.5l1-.2c-1.5 3-4 6.5-6.5 7c-1.8.2-2.3-4-2-7.3z" fill="#ffe22a" stroke="#c8a800" stroke-width=".7"/></svg>
<svg class="ic" style="left:359px;top:100px" viewBox="0 0 24 24"><g transform="translate(-.5 0) scale(1.04 1.12)"><g opacity=".75"><path d="M1 9c-1-5 4-8.5 10-8c3 .3 5 .3 7.5 0c4-.4 5.5 3 5 7c-.5 4-3.5 7-7.5 6c-2.5-.6-3.5-2.5-5.5-1c-2 1.5-4 1.8-6 1c-2-.8-3.1-2.5-3.5-5z" fill="#f6e89a" stroke="#d8c060" stroke-width=".8"/><path d="M4 8.5c-.5-3 2.5-5 7-4.7c3 .2 5 .3 7.5 0c2.5-.2 3 1.8 2.5 4c-.5 2.5-2 4-4.5 3.2c-2.5-.8-4-2.5-6.5-.8c-1.8 1.2-3 1.5-4 1c-1.2-.6-1.8-1.5-2-2.7z" fill="#b4dcc0" stroke="#9ab8a8" stroke-width=".8"/></g></g></svg>
<svg class="ic" style="left:397px;top:100px" viewBox="0 0 24 24"><g transform="translate(-1.5 -.5) scale(1.13)"><path d="M9.5 2.5c-4-1.5-8.5 1-8 4.5c.3 2.5 2.5 4 5 3.5c1.5-.3 2 1.5 2.5 3z" fill="#8fca94" stroke="#6a6a6a" stroke-width="1"/><path d="M13 2c3-.8 6.5.8 6.5 4c0 3-2 5.5-5 5c-1.2-.2-2 .5-2.5 1.5z" fill="#8fca94" stroke="#6a6a6a" stroke-width="1"/><path d="M12.5 .5l-3.5 14M9.5 2l3.5 12" stroke="#555" stroke-width="1.5"/><path d="M12.5 .5l-3.5 14M9.5 2l3.5 12" stroke="#ddd" stroke-width=".5"/><ellipse cx="8.3" cy="18.5" rx="1.5" ry="3" transform="rotate(20 8.3 18.5)" fill="none" stroke="#c01018" stroke-width="1.5"/><ellipse cx="13.7" cy="18.3" rx="1.5" ry="3" transform="rotate(-20 13.7 18.3)" fill="none" stroke="#c01018" stroke-width="1.5"/></g></svg>
<svg class="ic" style="left:435px;top:100px" viewBox="0 0 24 24"><g transform="translate(-1.8 -.5) scale(1.15)"><path d="M11 3c-3-2.5-9-1.5-9.5 2.5c-.5 3.5 1 6.5 4 7.5c2 .6 4-.5 5.5-2z" fill="#8fca94" stroke="#5a5a5a" stroke-width="1.1"/><path d="M12 3c3-2.5 8.5-1.5 9 2.5c.4 3.5-1 6.5-4 7.5c-2 .6-3.5-.5-5-2z" fill="#8fca94" stroke="#5a5a5a" stroke-width="1.1"/><path d="M10 1v11M13.5 1v11M8.5 3.5h6.5M8.5 6.5h6.5M8.5 9.5h6.5" stroke="#555" stroke-width="1.1"/><path d="M11.5 12c-3 2-1 3 0 3.5c1.5.8-2 2-.5 3.5l2 2" fill="none" stroke="#555" stroke-width="1.1"/></g></svg>
<svg class="ic" style="left:472px;top:100px" viewBox="0 0 24 24"><g transform="translate(-2.5 0) scale(1.18)"><path d="M13 1l9-1l-3.5 6.5l-4.5 1.5l.5 2l-2 1l-1-3z" fill="#9a9a9a" stroke="#666" stroke-width=".8"/><path d="M14 1.5l7-.8" stroke="#ddd" stroke-width="1"/><rect x="5.5" y="15.5" width="13" height="4.5" fill="#6a9ac8" stroke="#2f5f8d"/><path d="M12 11.5l2.2 4.5l-2.2 2.5l-2.2-2.5z" fill="#f2e24a" stroke="#2f5f8d" stroke-width=".8"/></g></svg>
<svg class="ic" style="left:511px;top:100px" viewBox="0 0 24 24"><g opacity=".8"><path d="M13 21.5a8.5 8.5 0 1 1 8-11.5" fill="none" stroke="#8fb6ee" stroke-width="2.6"/><path d="M17.5 9.5l7-1.5l-2.5 7z" fill="#8fb6ee"/><path d="M13 21.5a8.5 8.5 0 0 1-8-6" fill="none" stroke="#c4d8f6" stroke-width="2.6"/></g></svg>
<div class="grip" style="left:7px;top:100px;height:24px"></div><div id="dock"></div>
<div class="gripH" style="left:8px;top:136px"></div>
<div class="gripH" style="left:8px;top:562px"></div>
<svg class="ic" style="left:12px;top:146.5px" viewBox="0 0 24 24"><path d="M2.5 3.5l6.5 14l6-14h5.5" fill="none" stroke="#345c86" stroke-width="1.2" stroke-linejoin="round"/><circle cx="2.5" cy="3.2" r="1.7" fill="#ededed" stroke="#345c86" stroke-width="1.1"/><circle cx="15" cy="3.2" r="1.7" fill="#ededed" stroke="#345c86" stroke-width="1.1"/><circle cx="20.8" cy="3.2" r="1.7" fill="#ededed" stroke="#345c86" stroke-width="1.1"/><circle cx="9" cy="17.5" r="1.9" fill="#ededed" stroke="#345c86" stroke-width="1.1"/><rect x="14" y="14" width="10" height="10" rx="2" fill="#569a58" stroke="#42803f" stroke-width=".6"/><path d="M19 15.7v6.6M15.7 19h6.6" stroke="#fff" stroke-width="1.9"/></svg>
<svg class="ic" style="left:12px;top:185.0px" viewBox="0 0 24 24"><g transform="translate(-1.2 -1)"><rect x="1.5" y="1" width="19" height="19" fill="#6b9bd1"/><path d="M1.5 1h6.3v6.3h-6.3zM14.2 1h6.3v6.3h-6.3zM7.8 7.3h6.4v6.4h-6.4zM1.5 13.7h6.3v6.3h-6.3z" fill="#1f3c66"/></g><rect x="14" y="14" width="10" height="10" rx="2" fill="#569a58" stroke="#42803f" stroke-width=".6"/><path d="M19 15.7v6.6M15.7 19h6.6" stroke="#fff" stroke-width="1.9"/></svg>
<svg class="ic" style="left:12px;top:222.8px" viewBox="0 0 24 24"><g fill="#5d8cc4" stroke="#264a78" stroke-width="1"><ellipse cx="5.8" cy="8" rx="4.8" ry="6.4"/><ellipse cx="16.4" cy="7.6" rx="4.4" ry="6"/><path d="M7.2 5.5c0-6 8-6 8 0v6.5c0 2 .5 4 .2 6.2c-.2 1.500 1 1.500 2.3 1c.2 1.500-1.5 2.5-3.3 2.3c-2.5-.3-3.3-2-3.4-4.5l-.3-4.5c-2-.5-3.5-2.5-3.5-7z"/></g><circle cx="9.3" cy="6.2" r=".7" fill="#fff"/><circle cx="13.3" cy="6.2" r=".7" fill="#fff"/><rect x="14" y="14" width="10" height="10" rx="2" fill="#569a58" stroke="#42803f" stroke-width=".6"/><path d="M19 15.7v6.6M15.7 19h6.6" stroke="#fff" stroke-width="1.9"/></svg>
<svg class="ic" style="left:12px;top:261.0px" viewBox="0 0 24 24"><path d="M1.5 23c1-7 6-16 21-22.5c.5 5-3 10.5-9 13c-4 1.7-8 3-10.5 7z" fill="#7fa9dc" stroke="#264a78" stroke-width="1" stroke-linejoin="round"/><path d="M3 20c3-7 9-13 18-18" fill="none" stroke="#e8f0fb" stroke-width="1.6"/><path d="M1.5 23.5c1.5-6.5 6-13 13-18" fill="none" stroke="#264a78" stroke-width=".9"/><rect x="14" y="14" width="10" height="10" rx="2" fill="#569a58" stroke="#42803f" stroke-width=".6"/><path d="M19 15.7v6.6M15.7 19h6.6" stroke="#fff" stroke-width="1.9"/></svg>
<svg class="ic" style="left:12px;top:299.0px" viewBox="0 0 24 24"><path d="M1.5 .8c10 .5 19 3.5 22 11.5c-7 2-16 5-21 9.5c4-6 5-13-1-21z" fill="#5d8cc4" stroke="#1f3c66" stroke-width="1" stroke-linejoin="round"/><path d="M7.5 2c3.5 5 3.5 11 1 16.5M12.5 3.5c3 4 3.5 9 1.5 12.5M17.5 6c2 2.5 2.5 5.5 1.5 8" fill="none" stroke="#1f3c66" stroke-width="1"/><path d="M2.5 22l20-9.5" stroke="#1f3c66" stroke-width="1"/><rect x="14" y="14" width="10" height="10" rx="2" fill="#569a58" stroke="#42803f" stroke-width=".6"/><path d="M19 15.7v6.6M15.7 19h6.6" stroke="#fff" stroke-width="1.9"/></svg>
<svg class="ic" style="left:12px;top:337.0px" viewBox="0 0 24 24"><ellipse cx="11.5" cy="10.5" rx="11" ry="9.8" fill="#a9c6ea" stroke="#5d8cc4" stroke-width="1"/><path d="M.5 10.5h22M2.5 5.5h18M2.5 15.5h18M11.5 .7v19.6M11.5 .7c-6 3.5-6 16 0 19.6M11.5 .7c6 3.5 6 16 0 19.6" fill="none" stroke="#dce8f7" stroke-width=".9"/><path d="M3 6l4-2.5l3 1l-1 3.5l-3 1.5l-2 3zM12 4l5-1l3.5 3.5l-2 1.5l-3-.5l-2.5 2zM9 11.5l3.5-.5l1.5 4l-2 3.5l-2.5-3z" fill="#2f5f9a" opacity=".85"/><rect x="14" y="14" width="10" height="10" rx="2" fill="#569a58" stroke="#42803f" stroke-width=".6"/><path d="M19 15.7v6.6M15.7 19h6.6" stroke="#fff" stroke-width="1.9"/></svg>
<svg class="ic" style="left:12px;top:375.0px" viewBox="0 0 24 24"><ellipse cx="11.5" cy="10.5" rx="11" ry="9.8" fill="#4d7db8" stroke="#15233c" stroke-width="1.5"/><path d="M1 7h21v3h-21zM1.5 13h20v3.5h-20z" fill="#dce8f7"/><path d="M.5 10.5h22M11.5 .7v19.6M11.5 .7c-6 3.5-6 16 0 19.6M11.5 .7c6 3.5 6 16 0 19.6" fill="none" stroke="#15233c" stroke-width="1"/><path d="M4 2.5q7.5-3 15 0l-1 2.5h-13zM3.5 18q8 3.5 16 0l-1.5-1h-13z" fill="#1f3558"/><rect x="14" y="14" width="10" height="10" rx="2" fill="#569a58" stroke="#42803f" stroke-width=".6"/><path d="M19 15.7v6.6M15.7 19h6.6" stroke="#fff" stroke-width="1.9"/></svg>
<svg class="ic" style="left:12px;top:413.0px" viewBox="0 0 24 24"><ellipse cx="11.5" cy="10.5" rx="11" ry="9.8" fill="#e3edf8" stroke="#5d8cc4" stroke-width="1"/><path d="M.5 10.5h22M2.5 5.5h18M2.5 15.5h18M11.5 .7v19.6M11.5 .7c-6 3.5-6 16 0 19.6M11.5 .7c6 3.5 6 16 0 19.6" fill="none" stroke="#6c9ad2" stroke-width=".9"/><path d="M5 5.5l4.5 10.5l4-10.5h4" fill="none" stroke="#222" stroke-width="1.1"/><circle cx="5" cy="5.3" r="1.4" fill="#fff" stroke="#222" stroke-width=".9"/><circle cx="13.5" cy="5.3" r="1.4" fill="#fff" stroke="#222" stroke-width=".9"/><circle cx="17.8" cy="5.3" r="1.4" fill="#fff" stroke="#222" stroke-width=".9"/><circle cx="9.5" cy="16" r="1.5" fill="#fff" stroke="#222" stroke-width=".9"/><rect x="14" y="14" width="10" height="10" rx="2" fill="#569a58" stroke="#42803f" stroke-width=".6"/><path d="M19 15.7v6.6M15.7 19h6.6" stroke="#fff" stroke-width="1.9"/></svg>
<svg class="ic" style="left:12px;top:451.5px" viewBox="0 0 24 24"><path d="M4.5 5.5c0-3.5 3-5 5.5-4.5c3 .6 4.5 3.5 3.5 7c-1 3.5-3.5 6.5-7.5 8.5l-1-1.5c2.5-1.5 4.5-4 4.8-6c-2.5 1-5.3-.5-5.3-3.5z" fill="#5d8cc4" stroke="#264a78" stroke-width="1" stroke-linejoin="round"/><rect x="14" y="14" width="10" height="10" rx="2" fill="#569a58" stroke="#42803f" stroke-width=".6"/><path d="M19 15.7v6.6M15.7 19h6.6" stroke="#fff" stroke-width="1.9"/></svg>
<svg class="ic" style="left:12px;top:489.5px" viewBox="0 0 24 24"><path d="M2.5 3.5l6.5 14l6-14h5.5" fill="none" stroke="#345c86" stroke-width="1.2" stroke-linejoin="round"/><circle cx="2.5" cy="3.2" r="1.7" fill="#ededed" stroke="#345c86" stroke-width="1.1"/><circle cx="15" cy="3.2" r="1.7" fill="#ededed" stroke="#345c86" stroke-width="1.1"/><circle cx="20.8" cy="3.2" r="1.7" fill="#ededed" stroke="#345c86" stroke-width="1.1"/><circle cx="9" cy="17.5" r="1.9" fill="#ededed" stroke="#345c86" stroke-width="1.1"/><rect x="14" y="14" width="10" height="10" rx="2" fill="#cfa60a" stroke="#b08c00" stroke-width=".6"/><path d="M19 15.3V22.7M15.3 19H22.7M16.3 16.3L21.7 21.7M16.3 21.7L21.7 16.3" stroke="#fff" stroke-width="1.45"/><circle cx="19" cy="19" r=".75" fill="#cfa60a"/><path d="M26.5 13.5h8l-4 7z" fill="#555"/></svg>
<svg class="ic" style="left:12px;top:527.5px" viewBox="0 0 24 24"><rect x="1.5" y=".5" width="19" height="19" fill="#efefef" stroke="#7d7d7d"/><rect x="14" y="13.5" width="10" height="10" rx="2" fill="#e8414f" stroke="#c8303e" stroke-width=".6"/><path d="M15.8 18.5h6.4" stroke="#fff" stroke-width="2.2"/></svg>
<div id="lhead"><span style="position:absolute;left:136px;top:0;width:60px;text-align:center">Layers</span>
<svg style="position:absolute;left:2px;top:4px" width="40" height="16" viewBox="0 0 40 16"><circle cx="7.8" cy="7.8" r="7" fill="#3c3c3c" stroke="#5a5a5a" stroke-width=".8"/><path d="M5 5l5.6 5.6M10.6 5l-5.6 5.6" stroke="#fff" stroke-width="2"/><circle cx="27.8" cy="7.8" r="7" fill="#3c3c3c" stroke="#5a5a5a" stroke-width=".8"/><rect x="26.5" y="5" width="5" height="4" rx=".8" fill="none" stroke="#fff" stroke-width="1.1"/><rect x="24.3" y="7.3" width="5" height="4" rx=".8" fill="#3c3c3c" stroke="#fff" stroke-width="1.1"/></svg></div>
<div id="tree">
<div class="row" style="top:0.0px">
<div class="arr"></div>
<div class="cb"><svg viewBox="0 0 16 17"><path d="M2.5 9.5l3.3 4.3l7.5-12.6" fill="none" stroke="#141a2a" stroke-width="2.2" stroke-linejoin="miter"/></svg></div>
<svg class="li" viewBox="0 0 18 16"><g fill="#fff" stroke="#555" stroke-width=".7"><path d="M3.5 11.2l1.4 1.4-1.4 1.4-1.4-1.4zM5.5 4.4l1.4 1.4-1.4 1.4-1.4-1.4zM12.5 1.5l1.4 1.4-1.4 1.4-1.4-1.4z"/></g></svg>
<span class="t">places</span>
</div>
<div class="row" style="top:20.0px">
<div class="arr"></div>
<div class="cb"><svg viewBox="0 0 16 17"><path d="M2.5 9.5l3.3 4.3l7.5-12.6" fill="none" stroke="#141a2a" stroke-width="2.2" stroke-linejoin="miter"/></svg></div>
<svg class="li" viewBox="0 0 18 16"><path d="M1 6c-1-3 1.5-5 5-4.5c2 .3 3 .8 5 .3c3-.7 5.5.7 5 4c-.4 2.8-2 4-4.5 3.2c-1.5-.5-2.5-.7-4 .2c-2 1.2-3 2.5-4.5 2.2c-1.5-.3-1.7-3.2-2-5.4z" fill="#e4e4e4" stroke="#8c8c8c" stroke-width=".9"/></svg>
<span class="t">buildings</span>
</div>
<div class="row" style="top:40.0px">
<div class="arr"></div>
<div class="cb"><svg viewBox="0 0 16 17"><path d="M2.5 9.5l3.3 4.3l7.5-12.6" fill="none" stroke="#141a2a" stroke-width="2.2" stroke-linejoin="miter"/></svg></div>
<svg class="li" viewBox="0 0 18 16"><path d="M1.5 3.5l5 10.5l4-11.5h4.5" fill="none" stroke="#666" stroke-width=".8"/><g fill="#fff" stroke="#666" stroke-width=".7"><circle cx="1.5" cy="3.3" r="1.1"/><circle cx="10.5" cy="2.5" r="1.1"/><circle cx="15.2" cy="2.5" r="1.1"/><circle cx="6.5" cy="14.2" r="1.1"/></g></svg>
<span class="t">roads</span>
</div>
<div class="row" style="top:60.0px">
<div class="arr"></div>
<div class="cb"><svg viewBox="0 0 16 17"><path d="M2.5 9.5l3.3 4.3l7.5-12.6" fill="none" stroke="#141a2a" stroke-width="2.2" stroke-linejoin="miter"/></svg></div>
<svg class="li" viewBox="0 0 18 16"><path d="M1 6c-1-3 1.5-5 5-4.5c2 .3 3 .8 5 .3c3-.7 5.5.7 5 4c-.4 2.8-2 4-4.5 3.2c-1.5-.5-2.5-.7-4 .2c-2 1.2-3 2.5-4.5 2.2c-1.5-.3-1.7-3.2-2-5.4z" fill="#e4e4e4" stroke="#8c8c8c" stroke-width=".9"/></svg>
<span class="t">water</span>
</div>
<div class="row" style="top:80.0px">
<div class="arrd"></div>
<div class="cb"><svg viewBox="0 0 16 17"><path d="M2.5 9.5l3.3 4.3l7.5-12.6" fill="none" stroke="#141a2a" stroke-width="2.2" stroke-linejoin="miter"/></svg></div>
<svg class="li" viewBox="0 0 18 16"><path d="M1.5 3.5l5 10.5l4-11.5h4.5" fill="none" stroke="#666" stroke-width=".8"/><g fill="#fff" stroke="#666" stroke-width=".7"><circle cx="1.5" cy="3.3" r="1.1"/><circle cx="10.5" cy="2.5" r="1.1"/><circle cx="15.2" cy="2.5" r="1.1"/><circle cx="6.5" cy="14.2" r="1.1"/></g></svg>
<span class="t">routes</span>
</div>
<div class="row" style="top:154.0px">
<div class="arr"></div>
<div class="cb"><svg viewBox="0 0 16 17"><path d="M2.5 9.5l3.3 4.3l7.5-12.6" fill="none" stroke="#141a2a" stroke-width="2.2" stroke-linejoin="miter"/></svg></div>
<svg class="li" viewBox="0 0 18 16"><path d="M1.5 3.5l5 10.5l4-11.5h4.5" fill="none" stroke="#666" stroke-width=".8"/><g fill="#fff" stroke="#666" stroke-width=".7"><circle cx="1.5" cy="3.3" r="1.1"/><circle cx="10.5" cy="2.5" r="1.1"/><circle cx="15.2" cy="2.5" r="1.1"/><circle cx="6.5" cy="14.2" r="1.1"/></g></svg>
<span class="t">rivers</span>
</div>
<div class="row" style="top:174.0px">
<div class="arr"></div>
<div class="cb"><svg viewBox="0 0 16 17"><path d="M2.5 9.5l3.3 4.3l7.5-12.6" fill="none" stroke="#141a2a" stroke-width="2.2" stroke-linejoin="miter"/></svg></div>
<svg class="li" viewBox="0 0 18 16"><path d="M1 6c-1-3 1.5-5 5-4.5c2 .3 3 .8 5 .3c3-.7 5.5.7 5 4c-.4 2.8-2 4-4.5 3.2c-1.5-.5-2.5-.7-4 .2c-2 1.2-3 2.5-4.5 2.2c-1.5-.3-1.7-3.2-2-5.4z" fill="#e4e4e4" stroke="#8c8c8c" stroke-width=".9"/></svg>
<span class="t">school_property</span>
</div>
<div class="abs" style="left:0;top:194px;width:292px;height:21px;background:#3875d7"></div>
<div class="row" style="top:194.5px">
<div class="arr" style="border-left-color:#9a9a9a"></div>
<div class="cb"><svg viewBox="0 0 16 17"><path d="M2.5 9.5l3.3 4.3l7.5-12.6" fill="none" stroke="#141a2a" stroke-width="2.2" stroke-linejoin="miter"/></svg></div>
<svg class="li" viewBox="0 0 18 16"><g transform="translate(8.5 7.5) rotate(24)"><path d="M-2.6 -8.5h5.2v12l-2.6 5.5l-2.6-5.5z" fill="#e8662a" stroke="#a8541e" stroke-width=".6"/><path d="M-2.6 -8.5h5.2v2h-5.2z" fill="#f0f0f0" stroke="#999" stroke-width=".5"/><path d="M-.9 -6v9.5M.9 -6v9.5" stroke="#f2a040" stroke-width=".9"/><path d="M-2.6 3.5l2.6 5.5l2.6-5.5z" fill="#e6e0d6" stroke="#888" stroke-width=".5"/><path d="M-.9 7.1l.9 1.9l.9-1.9z" fill="#444"/></g></svg>
<span class="t" style="color:#fff;text-decoration:underline;left:79px">landuse</span>
</div>
<div class="row" style="top:216.0px">
<div class="cb off"></div>
<svg class="li" viewBox="0 0 18 16"><rect x="0" y="0" width="16" height="16" fill="#c8c8c8"/><path d="M0 0h5.3v5.3h-5.3zM10.7 0h5.3v5.3h-5.3zM5.3 5.3h5.4v5.4h-5.4zM0 10.7h5.3v5.3h-5.3z" fill="#8c8c8c"/><path d="M5.3 0h5.4v5.3h-5.4zM10.7 10.7h5.3v5.3h-5.3z" fill="#efefef"/><path d="M5.3 10.7h5.4v5.3h-5.4z" fill="#9f9f9f"/></svg>
<span class="t">3420C_2010_327_RGB_LATLNG</span>
</div>
<div class="abs" style="left:45px;top:109px;width:16px;height:1px;background:#f0a848"></div>
<div class="abs" style="left:45px;top:126px;width:3.5px;height:2.5px;background:#dccb9c"></div>
<div class="abs" style="left:52px;top:126px;width:4.5px;height:2.5px;background:#dccb9c"></div>
<div class="abs" style="left:45px;top:144px;width:11.5px;height:3px;background:#dcc98e"></div>
</div>
<div class="abs" style="left:49px;top:1120px;width:292px;height:12px;background:#e2e2e2;border:1px solid #cdcdcd;border-top:none;border-radius:0 0 4px 4px"></div>
<div class="abs" style="left:130px;top:1121px;width:61px;height:21px;border:1px solid #6c6c6c;border-radius:4px 0 0 4px;background:linear-gradient(#8a8a8a,#9d9d9d 50%,#7e7e7e);color:#fff;font-size:13px;line-height:19px;text-align:center;text-shadow:0 1px 1px #444">Layers</div>
<div class="abs" style="left:191px;top:1121px;width:71px;height:21px;border:1px solid #9c9c9c;border-left:none;border-radius:0 4px 4px 0;background:linear-gradient(#ffffff,#f1f1f1 50%,#e4e4e4);color:#000;font-size:13px;line-height:19px;text-align:center">Browser</div><div id="mapwrap"><svg width="1575" height="1010" viewBox="401 166 1575 1010" style="position:absolute;left:0;top:0">
<defs>
<pattern id="hatch" width="2.5" height="2.5" patternUnits="userSpaceOnUse"><rect width="2.5" height="2.5" fill="#a6c8ff"/><path d="M0 0.5H2.5M0.5 0V2.5" stroke="#2a3cff" stroke-width=".62"/></pattern>
<g id="X"><path d="M-4 -4L4 4M-4 4L4 -4"/></g>
<g id="Xs"><path d="M-3 -3L3 3M-3 3L3 -3"/></g>
</defs>
<style>.rd{fill:none;stroke-linecap:round;stroke-linejoin:round}.ra{stroke:#ffeb98;stroke-width:2.75}.rb{stroke:#b3b3b3;stroke-width:1.55;stroke-dasharray:1.45 1.1;stroke-linecap:butt}.ta{stroke:#ffeb98;stroke-width:2.6}.tb{stroke:#b3b3b3;stroke-width:1.45;stroke-dasharray:1.4 1.1;stroke-linecap:butt}.rv{fill:none;stroke:#a5cdff;stroke-width:1.15;stroke-linejoin:round}.xx{stroke:#ff0000;stroke-width:.95;fill:none;opacity:.92}.xl{stroke:#ff1010;stroke-width:.9;fill:none;opacity:.8}.lb{font-family:"Liberation Sans",sans-serif;fill:#fff;stroke:#6a6a6a;stroke-width:2.2px;paint-order:stroke;stroke-linejoin:round}.pt{fill:#468c4d;stroke:#fff;stroke-width:1.1}</style>
<polygon points="1560,179 1568.5,170.5 1595,177 1626,177 1647,188 1652.5,198 1686,212 1714,206 1739,206 1750,220 1757,223 1782,234 1793,239 1793,261 1791.6,272 1782,282 1789,297 1778,316 1787,334 1785,337.5 1757,412 1758,487 1755.5,487 1754,415 1750,385 1750,355 1747.5,320 1727.5,325 1700,331 1703.8,355 1695,372.5 1675,405 1657.5,417.5 1617.5,417.5 1600,420 1580,405 1575,390 1555,390 1535,393.8 1520,391 1507.5,380 1482.5,365 1467.5,350 1471,338.8 1530,343.8 1537.5,327.5 1545,313.8 1602.5,310 1610,265 1612.5,242.5 1607,240.7 1579.6,250.4 1557.5,229.7 1542.4,222.8 1543.8,207.7 1547.9,192.5" fill="#daf5c9"/>
<polygon points="1653,338 1697,333 1700,356 1690,372 1668,402 1652,412 1650,390" fill="#fff"/>
<polygon points="1600,378 1647,388 1650,412 1640,413 1597,410 1590,400" fill="#fff"/>
<polygon points="767.7,574 783.7,582.4 779.9,604.9 764.9,634.9 756.5,640.5 740.6,634.9 751.8,593.7 760.2,576.8" fill="#daf5c9"/>
<polygon points="1005.6,513.8 1028.8,515.6 1027.5,526.2 1005,523.8" fill="#daf5c9"/>
<polygon points="882.5,446 952.5,428.8 982.5,427 998.8,433.8 1012.5,468.8 1007,482.5 995,487.5 976,487.5 960,476 943.8,512.5 959.7,540.3 967.2,539.3 972.8,554.3 963.5,567.4 941.9,574 943.8,589.9 914.8,602.1 901.6,602.1 893.2,593.7 875.4,595.5 865.1,587.1 886.7,556.2 896,535.6 879.2,516.9 881,521 880,505 872.5,495 874.4,467.5" fill="#e0edf2"/>
<polygon points="849.7,284.9 957.5,256.9 972.5,242 1010.4,246.5 1015.4,259.9 1053.3,231 1079.3,241 1115.2,268.9 1091.3,290.8 1068.3,275.9 1032.4,308.8 1066.3,341.7 1043.4,362.7 970.5,384.7 938.6,401.6 906.2,421.2 875,440 850,461.2 825,497.5 810,513.8 790,501.9 818.1,458.1 803.8,450 762.5,500 750,508.8 733.8,511.9 726.2,506.2 801.2,421.2 797.5,417.5 797.5,402 803.5,392.5 793.8,374.7 794.8,365.7 792.3,341.7 807.8,325.8" fill="#8fbeb5"/>
<polygon points="979,358 995,342 1006,350 1003,362 990,364" fill="#daf5c9"/>
<polygon points="919,381 927,372 931,375 926,381 936,389 948,377 951,380 937,395" fill="#cc9ffa"/>
<polygon points="933,366 945,353 958,362 955,366 945,359 938,368 949,377 946,380" fill="#cc9ffa"/>
<polygon points="965,332 982,331 975,341 970,338" fill="#cc9ffa"/>
<polygon points="1098.8,535.1 1204.7,629.7 1178.4,654.8 1189.7,661.7 1241.7,612.8 1268,628.5 1291.9,619.1 1259.3,596.5 1199.7,558.3 1212.7,543.6 1209.7,534.5 1218.8,541.3 1241.5,558 1257,566.5 1280.5,579 1309.5,590 1317,592.5 1344.5,597.5 1356,600 1383,602.5 1471,605 1523,601.5 1538,607.5 1544.5,614 1562,632.5 1573,637.5 1581,637.5 1594.5,632.5 1607,631 1626,636 1595.5,660 1584.5,712.5 1652,774 1638.5,796 1604.5,835 1584.5,839 1574.5,862.5 1575.5,877.5 1567,895 1469.5,915 1391,933.5 1378,950 1385.5,990 1350.5,1012.5 1331,996 1263.5,1020 1227,1033 1129,1009 1118.5,1006 1107.5,1000 1101,1010 1097.5,1004 1076.5,995 1047.5,997.5 1025,998.5 1015,995 992.5,981.5 960,957.5 957.5,937.5 965,917.5 1005,886.5 987.5,875 965,862.5 911.5,848.5 892.5,850 877.5,856.5 848.5,856.5 840,842.5 822.5,849 807.5,852.5 807.5,872.5 800,890 750,926.5 714,945 692.5,952.5 677.5,951.5 642.5,938.5 632.5,930 626,910 631,882.5 645,852.5 651.5,827.5 645,802 635,787.5 733.5,682.6 746.2,679.4 764.9,660.1 769.6,657.9 806.1,657.3 809.9,648 838.9,604 897.9,627.4 917.6,622.7 1019.6,536.5" fill="#ffff00" stroke="#111" stroke-width=".95" stroke-linejoin="round"/>
<polygon points="1098.8,535.1 1199.7,558.3 1259.3,596.5 1291.9,619.1 1273.7,624.7 1268,628.5 1241.7,612.8 1189.7,661.7 1178.4,654.8 1204.7,629.7" fill="#daf5c9"/>
<path d="M1098.8 535.1 L1204.7 629.7 L1178.4 654.8 L1189.7 661.7 L1241.7 612.8 L1268 628.5" fill="none" stroke="#333" stroke-width=".7"/>
<path d="M1291.9 619.1 L1259.3 596.5 L1199.7 558.3 L1212.9 543.2" fill="none" stroke="#222" stroke-width=".9"/>
<path class="rv" d="M705.3 166.5C704.8 168 702.6 176.3 701 179.7C699.4 183.1 691.4 194.2 690.6 197.4C689.8 200.6 694 205.6 693.5 209.2C693 212.8 686.6 225.1 686 230C685.4 234.9 686.4 250.3 687.6 253.5C688.8 256.7 696 257.9 696.5 259.4C697 260.9 691.2 264.2 692 266.8C692.8 269.4 702.8 279.6 703.8 283C704.8 286.4 702.6 293.8 701 297.7C699.4 301.6 690.5 315 689 318.4C687.5 321.8 688.7 326.1 687.6 328.7C686.5 331.3 680.1 337.6 678.8 342C677.5 346.4 676.6 364.6 675.8 368.5C675 372.4 673.2 374.2 671.4 377.4C669.6 380.6 660.6 390.9 659.6 398C658.6 405.1 661.9 436.1 662.5 442.3C663.1 448.5 663.9 451.7 665.5 454C667.1 456.3 675.4 459.1 677.3 463C679.2 466.9 681.9 484.3 683.2 489.5C684.5 494.7 688.2 505.8 689 510C689.8 514.2 689.9 524.5 690.6 527.8C691.3 531.1 693.4 538.3 695 539.6C696.6 540.9 701.7 539.1 705 540C708.3 540.9 722.8 544.5 725 547.5C727.2 550.5 724.5 563.1 725 567.5C725.5 571.9 730.5 582.3 730 587.5C729.5 592.7 723.3 610 720 615C716.7 620 703.3 628.6 700 632.5C696.7 636.4 691.4 645.3 690 650C688.6 654.7 689.7 670.3 687.5 675C685.3 679.7 672.2 688.6 670 692.5C667.8 696.4 667.5 704.2 667.5 710C667.5 715.8 671.9 740 670 745C668.1 750 653.9 750.6 650 755C646.1 759.4 636.6 781.7 635 785 M665 500C665.8 501.1 670 509.2 672.5 510C675 510.8 685.3 505.3 687.5 507.5C689.7 509.7 690.6 526.4 692.5 530C694.4 533.6 703.6 538.9 705 540 M401.5 301.3C403.6 302.2 414.9 307.9 420.6 309.5C426.3 311.1 445.5 313.3 453 315.4C460.5 317.5 481.4 326.6 488.5 328.7C495.6 330.8 510.5 333.5 518 334.6C525.5 335.7 549.8 338.6 556.3 339C562.8 339.4 572.1 337.2 577 338.5C581.9 339.8 596.9 347.8 600.6 350.8C604.3 353.8 609.9 362.4 611 365.6C612.1 368.8 609.9 377.1 611 380.3C612.1 383.5 618.9 390.5 621.2 395C623.5 399.5 630 415.7 631.6 421.6C633.2 427.5 633.6 442 636 448.2C638.4 454.4 649.8 471.4 653.7 477.7C657.6 484 667.7 502.1 671.4 505.7C675.1 509.3 685.8 509.5 687.6 510 M1187.5 166C1188.4 167.1 1195.1 174.2 1196 176C1196.9 177.8 1194.2 181 1196 182.5C1197.8 184 1209.6 186.9 1212.5 190C1215.4 193.1 1221.6 207.6 1222.5 211C1223.4 214.4 1218.2 218.4 1221 221C1223.8 223.6 1244.9 232.1 1247.5 235C1250.1 237.9 1243.1 244.2 1245 247.5C1246.9 250.8 1260 262.7 1265 265C1270 267.3 1283.4 266.3 1290 268.8C1296.6 271.2 1320 285.2 1325 287.5C1330 289.8 1331.7 290.4 1335 290C1338.3 289.6 1351.2 284.2 1355 283.8C1358.8 283.3 1365.6 284.1 1370 286C1374.4 287.9 1389 298.6 1395 301C1401 303.4 1420 306.1 1425 307.5C1430 308.9 1437.5 310.7 1440 313.8C1442.5 316.8 1445 330.5 1447.5 335C1450 339.5 1458.9 350.9 1462.5 355C1466.1 359.1 1476.3 367.3 1480 372.5C1483.7 377.7 1493.8 398.1 1496 402.5C1498.2 406.9 1497.4 410 1500 412.5C1502.6 415 1516.7 422.5 1520 425C1523.3 427.5 1525.6 432.8 1530 435C1534.4 437.2 1554.2 442.5 1560 445C1565.8 447.5 1578.1 454.2 1582.5 457.5C1586.9 460.8 1595.9 472.8 1600 475C1604.1 477.2 1617.4 476.9 1620 477.5C1622.6 478.1 1622.3 478.8 1624 480C1625.7 481.2 1632 486.2 1635 488.3C1638 490.4 1647 496.8 1651.6 499.3C1656.2 501.8 1671.4 509.3 1676.4 511C1681.4 512.7 1691.9 513.7 1697 515.1C1702.1 516.5 1718.8 523.1 1723.2 523.4C1727.6 523.7 1734.2 518.4 1736.9 517.9C1739.6 517.4 1746.2 518.4 1747.3 518.5 M1317.5 211C1316.1 212 1306.1 215.4 1305 220C1303.9 224.6 1306 247 1307.5 252.5C1309 258 1317.4 266.7 1318.8 270C1320.1 273.3 1319.9 281.1 1320 282.5 M1450 266C1449.3 267 1444.8 271.3 1443.8 275C1442.7 278.7 1440.3 295.6 1440 300C1439.7 304.4 1440.9 313.4 1441 315 M1058.8 166C1058.3 166.7 1055 170.7 1055 172.5C1055 174.3 1060.1 179.2 1058.8 182.5C1057.4 185.8 1043.9 198.7 1042.5 202.5C1041.1 206.3 1045.9 214.2 1046 217.5C1046.1 220.8 1045.5 230 1043.8 232.5C1042 235 1031.2 237.2 1030 240C1028.8 242.8 1034.2 254.2 1032.5 257.5C1030.8 260.8 1018.6 267.5 1015 270C1011.4 272.5 1003.3 277.6 1000 280C996.7 282.4 987.4 289.8 985 292C982.6 294.2 979.1 297.8 978 300C976.9 302.2 977 309.8 975 312C973 314.2 963 317.8 960 320C957 322.2 951.3 329.2 948 332C944.7 334.8 933.1 341.4 930 345C926.9 348.6 922.8 361.4 920 365C917.2 368.6 909.4 375 905 378C900.6 381 885 388.5 880 392C875 395.5 863.3 407.1 860 410C856.7 412.9 851.6 415.8 850 418C848.4 420.2 847.2 427.8 845 430C842.8 432.2 832.8 435.8 830 438C827.2 440.2 823.3 446.5 820 450C816.7 453.5 803.1 466.1 800 470C796.9 473.9 794.8 482.8 792 485C789.2 487.2 777.4 487.8 775 490C772.6 492.2 771.1 501.7 770 505C768.9 508.3 765.5 518.4 765 520 M1748.8 166C1748.6 167 1747.5 173 1747.5 175C1747.5 177 1748.6 182.8 1748.8 183.8 M1745 385C1745.4 388.3 1748.5 403.8 1748.8 415C1749 426.2 1747.5 477.6 1747.5 487C1747.5 496.4 1748.4 466.1 1748.5 500C1748.6 533.9 1748.5 762.5 1748.5 795 M1694.5 984C1696.4 981.6 1707.3 965 1712 962.5C1716.7 960 1733 961.8 1737 961C1741 960.2 1747.2 955.7 1748.5 955 M1060 205C1060.9 206.1 1066.3 212.8 1068 215C1069.7 217.2 1074.2 223.9 1075 225 M400 822.5 L465 847.5 M463.9 849.8C468.9 852.1 503.9 868.9 508.9 871.3C513.9 873.6 509.1 871.3 509.2 871.4C509.2 871.4 509.3 871.4 509.4 871.4C509.5 871.4 506.9 871.1 509.7 871.5C512.4 871.9 531.9 874.6 534.7 875 M466.1 845.2C471 847.6 503.1 863.9 510.7 866.6C518.3 869.3 532.6 869.6 535.3 870 M536.8 876.6C538.7 875.8 552.3 870 554.3 869.1C556.2 868.3 554.6 869 554.7 868.9C554.8 868.9 555 868.8 555.1 868.7C555.1 868.6 555.3 868.5 555.4 868.4C555.5 868.4 555.7 868.2 555.7 868.1C555.8 868 556 867.9 556 867.8C556.1 867.7 556.3 867.5 556.3 867.4C556.4 867.3 555.4 869.3 556.5 867C557.6 864.8 565.4 849.3 566.5 847C567.6 844.8 566.7 846.7 566.7 846.6C566.7 846.5 566.8 846.3 566.8 846.2C566.9 846.1 566.9 845.9 566.9 845.8C567 845.7 567 845.4 567 845.3C567 845.2 567 845 567 844.9C567 844.8 567.2 846.7 567 844.4C566.7 842.2 564.8 826.7 564.5 824.4C564.2 822.2 564.4 824.1 564.4 823.9C564.3 823.8 564.3 823.6 564.2 823.5C564.2 823.3 565.4 825.8 564 823C562.6 820.2 553.9 803.1 551.6 798.1C549.2 793.1 543.1 780.5 542.5 777.6C541.8 774.7 541.9 772.8 545.5 771.6C549 770.4 568 766.8 574.9 767.1C581.8 767.4 602 771.8 608.3 774.2C614.7 776.6 630 787.3 632.7 788.9 M535 872.5C536.9 871.7 549.5 868 552.5 865C555.5 862 561.7 849.4 562.5 845C563.3 840.6 561.6 830 560 825C558.4 820 550 805.2 547.5 800C545 794.8 538 781.1 537.5 777.5C537 773.9 538.4 769.1 542.5 767.5C546.6 765.9 567.6 762.2 575 762.5C582.4 762.8 603.4 767.5 610 770C616.6 772.5 632.2 783.4 635 785 M533.2 868.4C535 867.6 546.5 864.2 549.2 861.5C551.9 858.9 557.2 848.1 557.9 844.2C558.6 840.3 557.2 831 555.6 826.3C554 821.7 544.8 804.7 543.5 802C542.1 799.3 544.5 804.3 543.4 801.8C542.3 799.3 534.5 781.8 533.4 779.3C532.3 776.8 533.3 779 533.2 778.9C533.2 778.8 533.1 778.6 533.1 778.5C533.1 778.4 533 778.2 533 778.1C533 778 533 777.7 533 777.6C533 777.5 533 777.3 533 777.2C533 777.1 533 776.8 533.1 776.7C533.1 776.6 533.1 776.4 533.2 776.3C533.2 776.2 533.3 776 533.3 775.9C533.3 775.8 532.9 776.6 533.5 775.5C534 774.3 537.9 766.6 538.5 765.5C539 764.3 538.6 765.2 538.7 765.1C538.7 765 538.9 764.8 538.9 764.8C539 764.7 539.1 764.5 539.2 764.4C539.3 764.4 539.4 764.2 539.5 764.1C539.6 764.1 539.8 763.9 539.8 763.9C539.9 763.8 540.1 763.7 540.2 763.6C540.3 763.6 540.5 763.5 540.6 763.4C540.7 763.4 540.9 763.3 541 763.3C541.1 763.2 541.3 763.2 541.4 763.1C541.5 763.1 538.2 763.6 541.8 763.1C545.4 762.5 570.7 758.6 574.3 758.1C577.9 757.5 574.6 758 574.7 758C574.8 758 575 758 575.1 758C575.2 758 575.5 758 575.5 758C575.6 758 572 757.3 575.9 758.1C579.8 758.9 607 764.8 610.9 765.6C614.8 766.4 611.3 765.7 611.4 765.7C611.5 765.8 611.8 765.9 611.9 765.9C612 766 609.5 764.5 612.3 766.1C615.1 767.8 634.6 779.5 637.3 781.1 M629.2 787.9C630.5 790.5 639.9 805.2 640.9 811.3C641.9 817.4 640.7 836 638.6 843.2C636.5 850.5 623.6 873.3 621.7 877.1C619.8 880.9 621.5 877.5 621.5 877.6C621.4 877.7 622.1 875.3 621.3 878.1C620.4 880.9 614.6 900.3 613.8 903.1C612.9 905.9 613.6 903.6 613.6 903.7C613.6 903.9 613.5 904.2 613.5 904.4C613.5 904.5 613.5 904.9 613.5 905C613.5 905.1 613.5 905.5 613.5 905.6C613.5 905.8 613.6 906.1 613.6 906.3C613.6 906.4 612.9 904.1 613.8 906.9C614.6 909.7 620.4 929.1 621.3 931.9C622.1 934.7 621.4 932.3 621.5 932.5C621.5 932.6 621.7 932.9 621.8 933.1C621.8 933.2 622 933.5 622.1 933.6C622.2 933.7 622.4 934 622.5 934.1C622.6 934.2 620.9 932.6 622.9 934.6C624.9 936.6 638.4 950.1 640.4 952.1C642.4 954.1 640.8 952.4 640.9 952.5C641 952.6 641.2 952.8 641.4 952.9C641.5 953 641.8 953.1 641.9 953.2C642 953.3 638.5 951.8 642.4 953.5C646.4 955.2 673.5 966.8 677.4 968.5C681.4 970.1 677.9 968.7 678.1 968.7C678.2 968.7 678.6 968.8 678.7 968.9C678.8 968.9 679.2 969 679.3 969C679.5 969 677.7 969 680 969C682.3 969 697.7 969 700 969C702.3 969 700.5 969 700.6 969C700.7 969 701.1 968.9 701.2 968.9C701.3 968.9 701.7 968.8 701.8 968.8C701.9 968.7 702.2 968.6 702.4 968.6C702.5 968.5 697.3 971.1 702.9 968.3C708.5 965.5 747.4 946.1 752.9 943.3C758.5 940.5 753.3 943.1 753.4 943C753.5 943 748.3 946.9 753.9 942.7C759.5 938.5 798.3 909.4 803.9 905.2C809.5 901 804.3 904.9 804.4 904.8C804.5 904.7 804.7 904.5 804.8 904.4C804.9 904.3 805.1 904 805.2 903.9C805.3 903.8 804.1 905.7 805.5 903.4C806.9 901.2 816.6 885.7 818 883.4C819.4 881.2 818.3 883 818.3 882.9C818.4 882.8 818.5 882.5 818.6 882.3C818.6 882.2 818.7 881.9 818.8 881.8C818.8 881.6 818.9 881.3 818.9 881.2C818.9 881 818.7 883.9 819 880.5C819.3 877.2 821.2 853.8 821.5 850.5 M639.9 782.5C641.3 785.3 651 804.7 652.4 807.5C653.8 810.3 652.6 808 652.7 808.1C652.7 808.2 652.8 808.5 652.8 808.6C652.9 808.8 652.9 809.1 652.9 809.2C653 809.3 653 809.7 653 809.8C653 809.9 653.3 806.5 653 810.4C652.7 814.3 650.8 841.5 650.5 845.4C650.2 849.3 650.4 845.8 650.4 845.9C650.4 846 650.3 846.3 650.3 846.5C650.3 846.6 650.2 846.9 650.1 847C650.1 847.1 651.8 843.6 649.9 847.5C648 851.3 635.3 875.7 632.6 882C630 888.4 625.8 900 625.7 905C625.7 910 629.9 922.9 632.4 927.1C634.8 931.3 642.8 939.6 648.1 942.9C653.5 946.2 675.6 955.4 681.1 957C686.7 958.6 691.4 959.7 698.7 957C706 954.3 736.4 939.5 747.1 932.8C757.8 926.1 789.3 902.2 795.9 896.2C802.5 890.2 805.6 883.3 807.1 878.2C808.6 873.1 809.3 852.7 809.5 849.5 M818.2 847.6C817.3 846.4 810.9 839.6 810.2 836.9C809.4 834.1 810 824.9 811.8 822.4C813.5 819.9 822.9 814.9 825.8 814.2C828.6 813.5 835.2 814.2 837.5 816.1C839.8 818.1 845.5 830.2 846.5 832C847.5 833.8 846.7 832.2 846.7 832.3C846.8 832.4 846.9 832.6 847 832.6C847 832.7 847.2 832.8 847.3 832.9C847.3 833 847.5 833.1 847.5 833.2C847.6 833.2 847.8 833.3 847.9 833.4C847.9 833.4 846 832.5 848.2 833.6C850.4 834.7 866 842.5 868.2 843.6C870.4 844.7 868.5 843.7 868.5 843.7C868.6 843.7 868.8 843.8 868.9 843.8C868.9 843.9 869.1 843.9 869.2 843.9C869.3 843.9 864.6 843.4 869.6 844C874.5 844.5 909.6 848.4 914.6 849C919.5 849.5 907.1 848.4 914.7 849C922.3 849.5 973.9 851.9 983.7 853.9C993.5 855.9 1001.3 864.1 1003.8 867.3C1006.3 870.5 1005.8 881.3 1006 883.1 M815 850C814 848.7 806.8 841.3 806 838C805.2 834.7 805.9 823.1 808 820C810.1 816.9 821.5 810.8 825 810C828.5 809.2 837.2 810.3 840 812.5C842.8 814.7 846.7 827 850 830C853.3 833 862.9 838.4 870 840C877.1 841.6 902.4 843.9 915 845C927.6 846.1 974.8 847.8 985 850C995.2 852.2 1004.8 861.4 1007.5 865C1010.2 868.6 1009.7 880.6 1010 882.5 M811.8 852.4C810.8 851.1 803.8 841.8 802.8 840.4C801.8 839 802.6 840.2 802.6 840.1C802.5 840 802.4 839.8 802.4 839.8C802.4 839.7 802.3 839.5 802.3 839.4C802.2 839.3 802.2 839.1 802.1 839.1C802.1 839 802.1 838.8 802.1 838.7C802 838.6 802 838.4 802 838.3C802 838.2 802 838 802 837.9C802 837.9 801.8 839.6 802 837.6C802.2 835.5 803.8 821.6 804 819.6C804.3 817.5 804.1 819.2 804.1 819.2C804.1 819.1 804.2 818.8 804.2 818.8C804.2 818.7 804.3 818.5 804.3 818.4C804.4 818.3 804.5 818.1 804.5 818C804.6 817.9 804.7 817.7 804.8 817.7C804.8 817.6 805 817.4 805 817.3C805.1 817.3 805.2 817.1 805.3 817C805.4 817 805.6 816.8 805.6 816.8C805.7 816.7 804.1 817.7 806 816.6C807.9 815.4 821.1 807.7 823 806.6C824.9 805.4 823.2 806.4 823.3 806.4C823.4 806.3 823.6 806.2 823.7 806.2C823.8 806.2 824 806.1 824.1 806.1C824.2 806.1 824.4 806 824.5 806C824.6 806 824.8 806 824.9 806C825 806 825.2 806 825.3 806C825.3 806 824 805.8 825.7 806.1C827.4 806.3 839 808.3 840.7 808.6C842.3 808.8 841 808.6 841 808.6C841.1 808.7 841.3 808.7 841.4 808.8C841.5 808.8 841.7 808.9 841.8 808.9C841.9 809 842 809.1 842.1 809.1C842.2 809.2 842.4 809.3 842.4 809.3C842.5 809.4 842.7 809.5 842.7 809.6C842.8 809.6 843 809.8 843 809.9C843.1 809.9 843.2 810.1 843.3 810.2C843.3 810.3 842.4 808.7 843.5 810.5C844.5 812.4 849.8 824.1 852.9 827C855.9 829.8 864.3 834.6 871.2 836.1C878 837.6 902.8 839.9 915.4 841C927.9 842.1 977.5 845.5 985.3 846C993 846.6 985.6 846 985.7 846.1C985.8 846.1 986 846.1 986.1 846.2C986.2 846.2 986.4 846.3 986.5 846.3C986.6 846.3 986.8 846.4 986.9 846.5C986.9 846.5 984.7 845 987.2 846.7C989.7 848.3 1007.2 860 1009.7 861.7C1012.2 863.3 1010 861.8 1010 861.9C1010.1 861.9 1010.2 862.1 1010.3 862.1C1010.4 862.2 1010.5 862.4 1010.6 862.4C1010.6 862.5 1010.7 862.6 1010.8 862.7C1010.8 862.8 1010.9 863 1011 863C1011 863.1 1011.1 863.3 1011.1 863.4C1011.2 863.4 1011.3 863.6 1011.3 863.7C1011.3 863.8 1011.4 864 1011.4 864.1C1011.4 864.1 1011.2 862.5 1011.5 864.4C1011.7 866.4 1013.7 880 1014 881.9 M1007.7 879.3C1002.7 882.8 967.6 908.2 962.7 911.8C957.7 915.4 962.4 911.9 962.4 912C962.3 912.1 962.1 912.2 962.1 912.3C962 912.3 961.9 912.5 961.8 912.6C961.8 912.6 961.7 912.8 961.6 912.9C961.6 912.9 962.5 911 961.4 913.2C960.3 915.4 952.5 931 951.4 933.2C950.3 935.4 951.3 933.5 951.3 933.6C951.2 933.6 951.2 933.8 951.2 933.9C951.1 934 951.1 934.2 951.1 934.3C951.1 934.4 951 934.6 951 934.6C951 934.7 951 934.9 951 935C951 935.1 950.7 932.6 951 935.4C951.3 938.2 953.2 957.6 953.5 960.4C953.8 963.2 953.6 960.7 953.6 960.8C953.6 960.9 953.6 961.1 953.7 961.1C953.7 961.2 953.8 961.4 953.8 961.5C953.8 961.6 953.9 961.8 953.9 961.8C954 961.9 954.1 962.1 954.1 962.2C954.2 962.2 954.3 962.4 954.4 962.5C954.4 962.5 954.5 962.7 954.6 962.8C954.7 962.8 954.8 963 954.9 963C954.9 963.1 951.3 960.5 955.2 963.3C959.1 966 986.3 985.5 990.2 988.3 M1012 885.3C1007.2 888.9 973.6 911.8 967.7 917.3C961.9 922.9 959.3 931.2 958.6 935.7C957.8 940.1 956.9 953 960.8 958.1C964.8 963.2 990.8 979.5 994.5 982.2 M992.5 985C995.2 985.5 1007.6 989.6 1017.5 990C1027.4 990.4 1075.3 989.1 1082.5 989"/>
<path class="rv" d="M463 850L467.5 845"/>
<polygon points="1614,243.5 1620.9,241.4 1634.6,247.6 1653.9,254.5 1644.3,266.2 1634.6,267.6 1622.2,264.8 1623.6,255.9 1619.5,249" fill="url(#hatch)" stroke="#1a1f3a" stroke-width="1" stroke-linejoin="round"/>
<polygon points="1536,340 1540,345 1550,351 1537.5,355.5" fill="url(#hatch)" stroke="#1a1f3a" stroke-width="1" stroke-linejoin="round"/>
<polygon points="1547.5,380 1555,392.5 1556,404 1550,404 1535,394 1545,389" fill="url(#hatch)" stroke="#1a1f3a" stroke-width="1" stroke-linejoin="round"/>
<polygon points="1383.8,365 1407.5,352 1413.8,362.5 1397.5,368" fill="url(#hatch)" stroke="#1a1f3a" stroke-width="1" stroke-linejoin="round"/>
<polygon points="1627.5,452.5 1655,457 1655,461 1640,461.5" fill="url(#hatch)" stroke="#1a1f3a" stroke-width="1" stroke-linejoin="round"/>
<polygon points="1698.8,471.2 1705,474 1718,472 1721,473 1720,480 1703,479" fill="url(#hatch)" stroke="#1a1f3a" stroke-width="1" stroke-linejoin="round"/>
<polygon points="1345,166 1350,172 1355,185 1352,189 1346,184" fill="url(#hatch)" stroke="#1a1f3a" stroke-width="1" stroke-linejoin="round"/>
<polygon points="1185,213.8 1192.5,212 1195,219 1190,218" fill="url(#hatch)" stroke="#1a1f3a" stroke-width="1" stroke-linejoin="round"/>
<polygon points="1200,328.8 1204,335 1211,348 1207,350 1200,349 1199,340" fill="url(#hatch)" stroke="#1a1f3a" stroke-width="1" stroke-linejoin="round"/>
<polygon points="1530.5,318 1535.5,315 1540,318 1540,323 1530.5,322" fill="url(#hatch)" stroke="#1a1f3a" stroke-width="1" stroke-linejoin="round"/>
<ellipse cx="1585" cy="193.9" rx="6.5" ry="5" fill="url(#hatch)" stroke="#1c2a66" stroke-width=".9"/>
<ellipse cx="1714.5" cy="237.7" rx="3.5" ry="3.2" fill="url(#hatch)" stroke="#1c2a66" stroke-width=".9"/>
<ellipse cx="1080.5" cy="239" rx="4.5" ry="4.7" fill="url(#hatch)" stroke="#1c2a66" stroke-width=".9"/>
<ellipse cx="1185.5" cy="195.5" rx="2" ry="3" fill="url(#hatch)" stroke="#1c2a66" stroke-width=".9"/>
<ellipse cx="1652.7" cy="551.9" rx="3.6" ry="3.2" fill="url(#hatch)" stroke="#1c2a66" stroke-width=".9"/>
<ellipse cx="1698.4" cy="525.4" rx="1.6" ry="2.6" fill="url(#hatch)" stroke="#1c2a66" stroke-width=".9"/>
<ellipse cx="1659.8" cy="513.7" rx="3" ry="1.6" fill="url(#hatch)" stroke="#1c2a66" stroke-width=".9"/>
<ellipse cx="1731.4" cy="538.5" rx="2.6" ry="2" fill="url(#hatch)" stroke="#1c2a66" stroke-width=".9"/>
<defs><g id="tw"><path d="M797.7 353.5 L823.2 334.3 M823.2 334.3 L839.2 322.3 M822.1 349.5 L853.4 325.8 M831.8 355.2 L863.3 331.5 M804.8 388.2 L821.4 375.7 M821.4 375.7 L878.8 332.5 M802.3 405.2 L841.8 375.4 M841.8 375.4 L872.6 352.2 M872.6 352.2 L893.3 336.6 M820.9 418.4 L832.4 409.8 M865.6 384.7 L950.2 321 M832.7 422.2 L839.2 417.3 M839.2 417.3 L913.1 361.6 M920.5 356.1 L951.6 332.7 M984.2 308.1 L992.4 301.9 M879 402.7 L947.6 351 M947.6 351 L978.5 327.7 M978.5 327.7 L1004.9 307.8 M861 430.5 L896.5 403.7 M896.5 403.7 L958.6 356.9 M958.6 356.9 L1017.8 312.3 M892.3 419.6 L931.6 390 M964.6 365.2 L1004 335.5 M1004 335.5 L1032.6 313.9 M948.4 393 L986.1 364.6 M986.1 364.6 L1016.8 341.5 M1016.8 341.5 L1041.7 322.7 M996.2 373.3 L1032.3 346.1 M1032.3 346.1 L1051.1 331.9 M1041.9 355.2 L1060.6 341.1 M1022.3 312.3 L1029.2 318.7 M1016.2 348.9 L1031.1 362.7 M944 322.6 L974.7 351.3 M974.7 351.3 L997.8 372.8 M920.6 342.6 L948.1 368.3 M948.1 368.3 L964.8 383.8 M863.9 328.5 L931 391 M826.4 325 L888 382.5 M888 382.5 L917.6 410.1 M803.1 341.7 L857.4 392.3 M857.4 392.3 L888.8 421.6 M799 373.2 L852.8 423.4 M852.8 423.4 L860.6 430.6 M881.6 455.5 L915.6 441.8 M878.6 463.5 L896 456.5 M943.1 437.5 L959.5 430.8 M876.5 472.7 L883.7 469.8 M911.3 458.6 L929.8 451.2 M929.8 451.2 L974.1 433.3 M875.9 481.4 L898.4 472.3 M940.6 455.3 L959.6 447.6 M964.8 445.5 L984.1 437.7 M984.1 437.7 L993 434.1 M875.4 489.1 L900.4 479 M927.6 468.1 L950.1 459 M950.1 459 L978.8 447.3 M984 445.2 L998.3 439.5 M887.8 492.5 L923.5 478.1 M941.6 470.8 L965.3 461.2 M965.3 461.2 L987.1 452.4 M987.1 452.4 L1001.2 446.7 M881.4 502.7 L915.8 488.9 M915.8 488.9 L923.2 485.8 M953.5 473.6 L967.5 467.9 M882.8 509.1 L890.7 505.9 M890.7 505.9 L908.5 498.7 M913.7 496.6 L927.6 491 M883.3 517.2 L927.4 499.3 M927.4 499.3 L932.9 497.1 M971.8 481.4 L988.7 474.6 M888.5 523.5 L894.8 521 M925.5 508.5 L937.1 503.9 M997.9 479.3 L1007.1 475.6 M893.6 529.2 L911.3 522 M911.3 522 L934.5 512.6 M904.2 531.5 L924.1 523.5 M896.2 541.2 L911.5 535 M911.5 535 L930 527.5 M892.2 550 L898.8 547.4 M904 545.3 L917.4 539.9 M886.6 560.8 L891.9 558.6 M891.9 558.6 L927.1 544.4 M927.1 544.4 L937.1 540.3 M878.5 572.3 L885.7 569.4 M890.9 567.3 L916.4 557 M921.6 554.9 L952.8 542.2 M887.5 575.1 L919.5 562.2 M924.7 560.1 L966.1 543.4 M870.8 588.6 L899.6 576.9 M899.6 576.9 L933.5 563.3 M933.5 563.3 L968.2 549.2 M876.2 592.9 L901.7 582.6 M901.7 582.6 L916.1 576.8 M950.7 562.8 L969 555.4 M894.9 591.9 L907.5 586.8 M907.5 586.8 L939.4 574 M957.7 566.6 L962.4 564.7 M901.1 598 L918.2 591.1 M976.7 430.5 L1001.4 470.1 M960.3 430.8 L973.1 451.2 M973.1 451.2 L994.2 485 M969.7 473.6 L976.8 485 M932.9 436.2 L942.5 451.6 M942.5 451.6 L956.1 473.3 M921.2 439 L924.6 444.5 M908.6 442.1 L924.9 468.2 M896.3 445.2 L906.5 461.6 M906.5 461.6 L922.4 487 M956.6 541.8 L965 555.2 M883.7 449.9 L895.5 468.8 M895.5 468.8 L921.4 510.2 M921.4 510.2 L930.7 525.1 M940.7 541.1 L956.8 566.8 M887 482.9 L897.6 499.9 M898.4 528.1 L918.9 561 M906.9 568.7 L915.9 583 M887.2 559.8 L895.3 572.8 M900.8 581.6 L912.1 599.6 M878.3 572.6 L889 589.7"/></g></defs>
<defs><g id="rds"><path d="M401.5 241C404.6 242.4 423.2 250.2 429.5 253.5C435.8 256.8 449.3 267.1 459 271C468.7 274.9 506.7 285.6 518 289C529.3 292.4 552.3 298.5 562 302C571.7 305.5 599 317.6 606.5 321C614 324.4 624.5 329.1 630 333C635.5 336.9 651.8 352.8 656.6 356.7C661.4 360.6 669.9 365.8 674 368.5C678.1 371.2 690.7 378.4 693.5 381C696.3 383.6 698.7 389.8 699.4 392C700.1 394.2 700.3 397.7 700 401C699.7 404.3 696.7 417.4 696.5 421.6C696.3 425.8 696.9 434.8 698 439C699.1 443.2 703.9 455.7 706.8 460C709.7 464.3 720.4 474.1 724.5 477.7C728.6 481.3 740.5 489.5 743.7 492.4C746.9 495.3 752.9 502.7 754 504 M693.5 381C695.8 380.8 707.3 379.6 714 379C720.7 378.4 746.7 377.2 754 376C761.3 374.8 776.3 369.4 780.5 368.5C784.7 367.6 790.7 368.1 792 368 M748 166.5C747.6 168.3 744.3 179 744.5 182.7C744.7 186.4 747.9 196.2 749.6 200.4C751.3 204.6 757.2 216.4 760 221C762.8 225.6 771.7 238.1 774.6 242.3C777.5 246.5 783.8 255.4 786.4 259.4C789 263.4 795.7 275.7 798 278.6C800.3 281.5 804.1 284.8 807 285.4C809.9 286 821.5 284.4 824.8 284.5C828.1 284.6 834 284.8 836.6 286C839.2 287.2 846.7 294 848 295 M774.6 242.3C773.3 242.9 765.4 245.7 762.8 247.6C760.2 249.5 753.6 255.7 751 259.4C748.4 263.1 741.3 277.6 739 281.5C736.7 285.4 731.5 291.7 730.4 294.8C729.3 297.9 728.7 305.6 729 309.5C729.3 313.4 731.7 325.1 733.3 330C734.9 334.9 741.3 348.7 743.7 353.8C746.1 358.9 753.1 372.8 755.5 376C757.9 379.2 761.4 380.9 765.8 383.3C770.2 385.7 792.1 396.4 795.3 398 M729 309.5C728.5 312.1 725.6 327.5 724.5 333C723.4 338.5 719.8 354.6 718.6 359.7C717.4 364.8 714.5 376.9 714 379 M702.4 313.4C703.8 313.6 712.6 314.4 715 315C717.4 315.6 723.5 318 724.5 318.4 M768.7 349.4C768 350.7 763.5 358.6 762 361C760.5 363.4 756.2 370.3 755.5 371.5 M824.8 284.5C824.8 283.9 822.9 281.4 824.8 278.6C826.7 275.8 838 263.1 842.5 259.4C847 255.7 861.1 247.2 866 244.6C870.9 242 881.5 237.6 886.7 235.8C891.9 234 907.8 229.9 913.3 228.4C918.8 226.9 933.1 222.8 937 222.5C940.9 222.2 946.4 223.9 948.7 225.5C951 227.1 956 235 957.5 237.3C959 239.6 959.7 245 962 246C964.3 247 976.2 246 978 246 M886.7 235.8C886.5 232.9 885.3 214.1 885.3 209.2C885.3 204.3 886.1 194.4 886.7 191.5C887.3 188.6 889.7 184.3 891 182.7C892.3 181.1 896 178.6 898.5 176.8C901 175 911.7 167.6 913.3 166.5 M869 166.5C870.6 167.3 880.6 172.7 883.8 173.8C887 174.9 896.9 176.5 898.5 176.8 M880 420C886.4 418 925.4 406.3 938.6 401.6C951.8 396.9 989.1 381.1 1000 377.5C1010.9 373.9 1027.9 370.4 1037.5 368.8C1047.1 367.1 1076.2 363.5 1087.5 362.5C1098.8 361.5 1130.4 359.9 1140 360C1149.6 360.1 1165.7 361.8 1175 363.8C1184.3 365.7 1209.3 373.1 1225 377.5C1240.7 381.9 1302.4 399.5 1317.5 403.8C1332.6 408 1350.7 413.1 1362.5 416.2C1374.3 419.4 1408.9 428.1 1425 432.5C1441.1 436.9 1495.8 452.9 1508.5 456.2C1521.2 459.6 1529.9 459.1 1540 462.5C1550.1 465.9 1589.9 482.6 1600 487C1610.1 491.4 1616.9 493.9 1632 502.5C1647.1 511.1 1724.5 557.4 1737 565C1749.5 572.6 1745 570.8 1746 571.5 M1362.5 430C1363.9 431 1370.9 434.4 1375 438.8C1379.1 443.1 1392.6 466.5 1400 470C1407.4 473.5 1436 470 1442.5 471C1449 472 1457 477.9 1458.8 478.8 M1361 417.5C1360.8 418.1 1358.8 421.6 1359 423C1359.2 424.4 1362.1 429.2 1362.5 430 M1062.5 350C1065.2 350.7 1082.1 355.8 1087.5 356C1092.9 356.2 1107.9 352.6 1112 352C1116.1 351.4 1122.4 350.4 1125 351C1127.6 351.6 1134.5 356 1136 357.5C1137.5 359 1139.4 363.1 1138.8 365C1138.1 366.9 1132.9 372.5 1130 375C1127.1 377.5 1115 385 1112.5 387.5C1110 390 1107.5 394.5 1107.5 397.5C1107.5 400.5 1110 409.2 1112.5 415C1115 420.8 1127 444.5 1130 450C1133 455.5 1136.4 460.9 1140 465C1143.6 469.1 1157.5 482.1 1162.5 487C1167.5 491.9 1180.3 505.2 1185 510C1189.7 514.8 1202.8 528.7 1205 531 M1067.5 166C1067 168.6 1062.9 185.7 1062.5 190C1062.1 194.3 1063.4 202.2 1063.8 205C1064.1 207.8 1065.8 213.9 1066 215 M1072.5 166 L1065 185 M1067.5 216C1071.6 215.4 1096.8 211.9 1105 211C1113.2 210.1 1134 208.8 1142.5 207.5C1151 206.2 1176.7 199.1 1182.5 199.5C1188.3 199.9 1192.1 209.3 1195 211C1197.9 212.7 1205.2 212.4 1208.8 215C1212.3 217.6 1224.6 232 1227.5 235C1230.4 238 1233.2 239.6 1235 242.5C1236.8 245.4 1242.9 254.1 1243.8 261C1244.6 267.9 1244.5 294.9 1242.5 305C1240.5 315.1 1228.5 345.4 1226 352.5C1223.5 359.6 1223.1 368.1 1220 370C1216.9 371.9 1202 370.2 1197.5 369.5C1193 368.8 1180.8 364.4 1178.8 363.8 M1142.5 208C1142.1 209.3 1139 217.5 1138.8 220C1138.5 222.5 1139.3 229.1 1140 231C1140.7 232.9 1144.5 236.3 1145 237 M1066 216C1067.8 217.8 1078.8 229.9 1082.5 232.5C1086.2 235.1 1097 238.1 1100 240C1103 241.9 1107.8 247.9 1110 250C1112.2 252.1 1119.5 256 1120 258.8C1120.5 261.5 1116 271.1 1115 275C1114 278.9 1114.3 291 1111 293.8C1107.7 296.5 1088.3 297.9 1085 300C1081.7 302.1 1081.8 309.2 1081 312.5C1080.2 315.8 1078.4 326.7 1077.5 330C1076.6 333.3 1074.2 340.4 1072.5 342.5C1070.8 344.6 1063.6 348.1 1062.5 348.8 M1246 301C1248.1 297.7 1261.8 274.5 1265 271C1268.2 267.5 1272.2 268.9 1275 268.8C1277.8 268.6 1287.7 268.8 1290 270C1292.3 271.2 1293 277.7 1296 280C1299 282.3 1315.5 287.1 1317.5 291C1319.5 294.9 1313.5 311 1313.8 315C1314 319 1317.4 323.8 1320 327.5C1322.6 331.2 1337.8 340.5 1337.5 348.8C1337.2 357 1319.7 396.6 1317.5 402.5 M1275 268.8C1275 267.5 1274.6 259.3 1275 257.5C1275.4 255.7 1275 252.4 1278.8 252.5C1282.5 252.6 1305.5 257.4 1308.8 258 M1418.8 240C1418.5 243.3 1417.1 263 1416.2 270C1415.4 277 1410.8 299.4 1411.2 303.8C1411.7 308.1 1419.2 307.7 1420 310C1420.8 312.3 1419.6 321.7 1418.8 325C1417.9 328.3 1413.7 337.8 1412.5 340C1411.3 342.2 1407.8 343.6 1407.5 345C1407.2 346.4 1409.2 350.6 1410 352.5C1410.8 354.4 1412.8 360.3 1415 362.5C1417.2 364.7 1428.3 371.4 1430 372.5 M1396 335C1396.4 335.4 1398.5 338.2 1400 338.8C1401.5 339.3 1408.9 339.9 1410 340 M1410 365C1407.2 366.1 1388.8 369.8 1385 375C1381.2 380.2 1377.5 408.1 1375 412.5C1372.5 416.9 1363.9 414.7 1362.5 415 M1442.5 301C1442.3 302.3 1440.3 309.6 1441 312.5C1441.7 315.4 1447.5 324.5 1448.8 327.5C1450 330.5 1450.4 337.2 1452.5 340C1454.6 342.8 1464.2 350 1467.5 352.5C1470.8 355 1478.1 359.5 1482.5 362.5C1486.9 365.5 1502.3 376.7 1507.5 380C1512.7 383.3 1524.8 389.5 1530 392.5C1535.2 395.5 1551.2 406 1555 407.5C1558.8 409 1560.6 404.4 1565 406C1569.4 407.6 1589.2 418.8 1595 422.5C1600.8 426.2 1614.2 437.1 1617.5 440C1620.8 442.9 1622.5 447.4 1625 448.8C1627.5 450.1 1636.2 451.8 1640 452.5C1643.8 453.2 1656.2 455.6 1660 455C1663.8 454.4 1672.2 448.3 1675 447.5C1677.8 446.7 1683.9 447.5 1685 447.5 M1540 221C1537.8 221.4 1523.6 223.7 1520 225C1516.4 226.3 1508.9 230.8 1507.5 232.5C1506.1 234.2 1506.7 237.7 1507.5 240C1508.3 242.3 1514.2 252.2 1515 253.8 M1540 221C1540.5 220.1 1541.2 212.9 1545 212.5C1548.8 212.1 1567.3 217.5 1575 217.5C1582.7 217.5 1607.8 212.5 1615 212.5C1622.2 212.5 1634.8 215.5 1640 217.5C1645.2 219.5 1657.5 228.2 1662.5 231C1667.5 233.8 1681.4 240.8 1685 242.5C1688.6 244.2 1690.6 245.1 1695 246C1699.4 246.9 1721.7 250.4 1725 251 M1695 246C1696.7 247.5 1704.8 257.1 1710 260C1715.2 262.9 1738.5 269.8 1742.5 272.5C1746.5 275.2 1745.7 281.4 1746 285C1746.3 288.6 1744.7 300.3 1745 305C1745.3 309.7 1748.6 321.2 1748.8 327.5C1748.9 333.8 1747.2 356.2 1746 362.5C1744.8 368.8 1741.2 379.2 1737.5 385C1733.8 390.8 1716.9 409.5 1712.5 415C1708.1 420.5 1700.5 431.4 1697.5 435C1694.5 438.6 1687.5 445.3 1685 447.5C1682.5 449.7 1677.8 453.6 1675 455C1672.2 456.4 1661.7 459.4 1660 460 M1615 188.8C1615.5 190.3 1619.7 199.9 1620 202.5C1620.3 205.1 1617.8 211.4 1617.5 212.5 M1692.5 213.8C1695.5 213.1 1714.1 208.6 1720 207.5C1725.9 206.4 1743.1 204.2 1746 203.8 M1695 246C1699.1 245.3 1726.7 241.9 1732.5 240C1738.3 238.1 1745.8 230 1747.5 228.8 M1655 265C1656.9 268.3 1670 289.2 1672.5 295C1675 300.8 1674.5 313.4 1677.5 317.5C1680.5 321.6 1697 329.5 1700 332.5C1703 335.5 1705 341.7 1705 345C1705 348.3 1702.5 357.8 1700 362.5C1697.5 367.2 1685.2 382.8 1682.5 387.5C1679.8 392.2 1677.8 401.7 1675 405C1672.2 408.3 1659.4 416.1 1657.5 417.5 M1655 322.5C1654.7 327.2 1653.3 354.8 1652.5 365C1651.7 375.2 1648.3 405.9 1647.5 415C1646.7 424.1 1646.4 444.8 1645 447.5C1643.6 450.2 1636.4 440.6 1635 440C1633.6 439.4 1632 441.1 1632.5 442.5C1633 443.9 1639.2 451.4 1640 452.5 M1652.5 336C1656.3 336.6 1683.1 339.5 1687.5 341C1691.9 342.5 1692 349 1692.5 350 M1652.5 348.8C1657.7 349.5 1689.8 354.5 1700 356C1710.2 357.5 1740 361.8 1745 362.5 M1685 447.5C1686.3 451.1 1695.2 474.6 1697 480C1698.8 485.4 1701.3 494.7 1701.8 496.5 M1702.5 493.8 L1708.7 493 M1657.5 460C1657.1 462.2 1654.7 477 1654.3 480C1653.9 483 1653.8 486.8 1653.7 487.6 M1400 338.8 L1412.5 337.5 M1640 217.5C1642.8 220.5 1659.5 241.2 1665 245C1670.5 248.8 1686.2 249.8 1690 252C1693.8 254.2 1698.9 263.6 1700 265 M1662 231C1664 233.6 1674.5 252 1680 255C1685.5 258 1708.5 257.7 1712 258 M400 625C411 622.2 478 605.5 500 600C522 594.5 585.7 581 600 575C614.3 569 625 550.8 630 545C635 539.2 641.7 525.6 645 522.5C648.3 519.4 654 517.4 660 517C666 516.6 693.4 518.3 700 518.5C706.6 518.7 717 519.7 720 519C723 518.3 725.2 514.3 727 512C728.8 509.7 734.2 500.2 736 498C737.8 495.8 742.9 493 743.7 492.4 M420 985C428.8 980.6 485.1 956.3 500 945C514.9 933.7 540.4 899.8 555 882.5C569.6 865.2 619.6 801.5 632.5 787.5C645.4 773.5 661.3 766.5 672.5 755C683.7 743.5 722.2 694.6 734 682.5C745.8 670.4 772.7 659.6 780 645C787.3 630.4 796.1 564.9 800 550C803.9 535.1 809.5 519.8 815 510C820.5 500.2 842.9 468.7 850 461C857.1 453.3 876.7 442.3 880 440 M555 882.5C555.8 884.4 561.7 894.2 562.5 900C563.3 905.8 560.7 927.9 562.5 935C564.3 942.1 577.2 961.7 579 965 M700 682.5C705.5 677.8 742 651.3 750 640C758 628.7 767.5 592.1 772.5 580C777.5 567.9 790.9 537.7 795 530C799.1 522.3 805 516.6 810 510C815 503.4 832.9 477.7 840 470C847.1 462.3 871.1 443.3 875 440 M740 510C740.5 511.6 745 520.3 745 525C745 529.7 740 549.2 740 552.5C740 555.8 744.5 554.7 745 555 M757.5 510C760 512.8 775.3 530.6 780 535C784.7 539.4 797.8 548.4 800 550 M750 590C750.3 593.3 753 615.3 752.5 620C752 624.7 743.1 630.3 745 632.5C746.9 634.7 765.9 638.1 770 640C774.1 641.9 781.1 648.9 782.5 650 M795 620 L785 645 M785 590C785.8 590.3 791.8 591.4 792.5 592.5C793.2 593.6 791.8 599.3 791 600C790.2 600.7 785.7 599.1 785 599 M1652 515C1648.2 519.4 1623.1 549 1617 555C1610.9 561 1603 566.2 1596.5 570C1590 573.8 1566.3 586.1 1558.2 589.2C1550.1 592.3 1529.8 598.2 1522.8 598C1515.8 597.8 1497.8 588.2 1494.7 587 M1745.5 592C1743.9 594.3 1734.6 607.6 1730.7 612.8C1726.8 618 1713.6 634.3 1710 639.3C1706.4 644.3 1699.7 654.8 1698.3 658.5C1696.9 662.2 1697.4 669.6 1697.5 673.2C1697.6 676.8 1700.2 685.8 1699 691C1697.8 696.2 1690 712.8 1686.5 720.4C1683 728 1673 750.1 1667 760C1661 769.9 1638.6 800.6 1632 810C1625.4 819.4 1614.2 834.5 1607 845C1599.8 855.5 1573.6 895.1 1567 905C1560.4 914.9 1552 928.4 1547 935C1542 941.6 1526.7 961.1 1522 965C1517.3 968.9 1508.9 970.3 1504.5 970C1500.1 969.7 1486.1 962.5 1482 962.5C1477.9 962.5 1470.6 969.8 1467 970C1463.4 970.2 1455.5 962.9 1449.5 964C1443.5 965.1 1416.1 978.2 1412 980 M1744.5 572.5C1742.3 573.9 1727 582.5 1724.5 585C1722 587.5 1722.3 593.9 1722 595 M1628.2 497.9C1632 498.4 1654.6 502.7 1662.6 502.7C1670.6 502.7 1694.9 498.6 1701.1 497.9C1707.3 497.2 1716.6 495.9 1719 496.5C1721.4 497.1 1721.2 502 1723.2 503.4C1725.2 504.8 1735.4 508.9 1736.9 509.6 M1629.6 501.3C1630.7 501.8 1637.6 504.8 1640 506C1642.4 507.2 1650.3 511.7 1651.6 512.4 M1648.8 517.2 L1655 525.4 M1640.6 528.2 L1644 535 M1692.4 587C1691.6 588.1 1685.3 595.5 1685 597.3C1684.7 599.1 1687.3 602.3 1689.4 603.2C1691.5 604.1 1700.6 604.8 1704.2 605.4C1707.8 606 1719 610.1 1721.9 609.1C1724.8 608.1 1732 598.4 1730.7 596.5C1729.4 594.6 1714.2 593 1710 592C1705.8 591 1694.3 587.5 1692.4 587 M1698 589 L1692 603.5 M1703.5 590.5 L1698 604.5 M1709 592 L1704.2 605.4 M1716 594 L1711 607 M1723 595.5 L1718 608.3 M1688 593 L1727 602 M1718.9 589.9C1719.2 589.3 1720.6 584.7 1721.9 584C1723.2 583.3 1729.1 583.2 1730.7 583.3C1732.3 583.4 1736.8 584.1 1736.6 584.7C1736.4 585.3 1730.1 588 1729.3 588.4 M1732.2 583.3C1732.4 582.7 1732.2 578.6 1733.7 577.4C1735.2 576.2 1744.2 572.8 1745.5 572.2 M1710 592C1711 591.8 1716.6 589.4 1718.9 589.9C1721.2 590.4 1729.4 595.8 1730.7 596.5 M909.6 418.6C911.3 421 921.2 429.7 925 440C928.8 450.3 941.7 504.5 943.8 512.5 M976 487.5C978.6 489.8 996.1 505.3 1000 508C1003.9 510.7 1007.7 511.3 1011 512C1014.3 512.7 1026.8 513.1 1030 514C1033.2 514.9 1036.9 517.6 1040 520C1043.1 522.4 1056 534.2 1058 536 M735 511C736.4 509.4 743.6 500.1 747.5 496.2C751.4 492.4 765.6 480.5 770 476.2C774.4 472 784.3 461.4 787.5 457.5C790.7 453.6 796.5 444.6 798.8 441.2C801 437.9 805.6 430.8 807.5 427.5C809.4 424.2 814.6 414.1 816.2 411.2C817.9 408.4 820.1 404.4 822.5 401.2C824.9 398.1 831.7 388.6 838 383C844.3 377.4 870.4 357.8 880 350C889.6 342.2 914.5 320.2 925 312C935.5 303.8 965.1 282.3 975 275C984.9 267.7 1006.4 250.8 1015 246C1023.6 241.2 1048.8 232.7 1053 231 M808.8 505C810.5 502.7 821.8 487.6 825 483.8C828.2 479.9 833.4 474 837.5 470C841.6 466 858.4 450.9 862.5 447.5C866.6 444.1 870.9 441.5 875 438.8C879.1 436 897.2 424.3 900 422.5 M790 502C792.1 502.3 806.5 503.7 808.8 505C811 506.3 809.9 513 810 514 M810 514C812.2 511.1 825.4 493.7 830 488C834.6 482.3 846.7 467.2 852 462C857.3 456.8 871.8 445.5 878 441C884.2 436.5 901.2 425.3 908 421C914.8 416.7 933 406 940 402C947 398 960.7 389.3 972 385C983.3 380.7 1028.9 366.6 1043 363C1057.1 359.4 1089.3 353.4 1100 352C1110.7 350.6 1135.6 350.2 1140 350 M849.7 285C851.9 287.2 863.9 298.9 870 305C876.1 311.1 897.5 332.6 905 340C912.5 347.4 931.7 366.3 938 372C944.3 377.7 959.4 389.8 962 392 M807.8 325.8C810.8 328.5 828.2 343.7 835 350C841.8 356.3 862.9 376.4 870 383C877.1 389.6 895.6 406.1 900 410C904.4 413.9 908.9 417.1 910 418 M905 300C908.9 303.9 932.3 327.9 940 335C947.7 342.1 968.8 360.1 975 365C981.2 369.9 993.7 378.4 996 380 M957 257C960.1 260.6 978.1 282.5 985 290C991.9 297.5 1012.9 318.2 1020 325C1027.2 331.8 1046.7 349 1050 352 M1015 260C1017.8 262.8 1034.4 279.3 1040 285C1045.6 290.7 1061.4 307.1 1066 312C1070.6 316.9 1080.2 328 1082 330 M1053 231C1054.9 233.1 1065.8 245.2 1070 250C1074.2 254.8 1087.7 271.1 1091 275C1094.3 278.9 1099 283.9 1100 285 M860 330C864.4 326.7 891.2 306.6 900 300C908.8 293.4 932.1 276.4 940 270C947.9 263.6 968.5 245.1 972 242 M800 395C804.4 392 831.2 374.6 840 368C848.8 361.4 871.2 342.5 880 335C888.8 327.5 915.6 303.9 920 300 M985 345C989.4 341.1 1015.9 317.6 1025 310C1034.1 302.4 1060.7 281.7 1068 276C1075.3 270.3 1088.5 260 1091 258 M1054.2 232.2C1052.6 234 1039.7 245.7 1039.7 248.7C1039.7 251.6 1051.3 257.4 1054.2 259C1057 260.6 1062.3 263.6 1065.5 263.1C1068.7 262.7 1079.8 255.1 1083.1 254.9C1086.4 254.7 1092.8 260.3 1095.5 261.1C1098.1 261.9 1105.6 262 1106.8 262.1 M1072.7 240.4C1070.7 242.5 1057.6 255.7 1054.2 259C1050.7 262.3 1044.8 267.3 1041.8 270.4C1038.7 273.4 1029.3 283.7 1026.3 286.9C1023.2 290.1 1016.6 296.8 1013.9 299.3C1011.2 301.8 1004.3 307.3 1001.5 309.6C998.7 311.9 991 317.7 988.1 319.9C985.1 322.2 976.1 329.1 974.7 330.2 M1054.2 232.2 L1072.7 240.4 M1032.5 263.1C1033.5 263.9 1039.7 268.9 1041.8 270.4C1043.8 271.8 1050 275.9 1051.1 276.6 M1032.5 263.1C1030.4 265.1 1018 276.9 1013.9 280.7C1009.8 284.4 998.9 294.1 995.3 297.2C991.7 300.3 983.6 306.2 980.9 308.6C978.1 311 972.6 316.7 970.5 318.9C968.5 321 963.2 327.2 962.3 328.2 M1013.9 280.7C1015.3 281.4 1023.6 285.3 1026.3 286.9C1029 288.5 1036.6 294.3 1038.7 295.1C1040.7 295.9 1043.5 295.1 1044.9 294.1C1046.2 293.1 1050.6 287.1 1051.1 285.9C1051.5 284.6 1047.4 284.9 1049 282.8C1050.6 280.6 1063.7 268.1 1065.5 266.2 M1065.5 263.1C1067.8 263.5 1081.6 265.9 1086.2 266.2C1090.7 266.6 1104.5 266.2 1106.8 266.2 M1086.2 266.2C1086.2 267.3 1085.3 273.9 1086.2 275.5C1087.1 277.1 1093.5 280.1 1094.4 280.7 M978.8 258C981.1 256.8 995.7 246.7 999.4 247.7C1003.2 248.6 1011.4 264.2 1012.9 266.2 M999.4 247.7C999.4 247 999.7 243.5 999.4 241.5C999.2 239.4 998.3 232 997.4 229.1C996.5 226.1 991.9 216.2 991.2 214.6 M969.5 248.7C970.2 250 974.2 258.1 975.7 261.1C977.2 264 982 273.1 982.9 275.5C983.8 277.9 984.4 281.2 984 282.8C983.5 284.3 980 288.7 978.8 290C977.5 291.2 974.4 293.1 972.6 294.1C970.8 295.1 965 297.6 962.3 299.3C959.5 301 951 307.3 947.8 309.6C944.6 311.9 935 318.8 933.4 319.9 M940.6 266.2C943.3 265.6 962 259.6 965.4 260C968.8 260.5 971.1 268.1 971.6 270.4C972 272.6 969.7 279.6 969.5 280.7 M942.7 273.5 L969.5 268.3 M954 275.5C954.9 276.2 960 280.8 962.3 281.7C964.5 282.6 972.4 284 974.7 283.8C976.9 283.6 982 280.1 982.9 279.7 M940.6 266.2C940.8 268.1 943.3 280.6 942.7 282.8C942 284.9 936.8 284.7 934.4 285.9C932 287 922.4 292.3 921 293.1 M928.2 269.3C928.9 271.2 934.1 282.8 934.4 285.9C934.7 288.9 931.6 296 931.3 297.2 M918.9 277.6C919.5 279.4 921.6 290.4 924.1 294.1C926.6 297.9 939.7 309.7 941.6 311.7 M909.6 277.6C910.4 279.9 915.6 295.1 916.8 298.2C918.1 301.4 920.5 305.6 921 306.5 M890 282.8C891.5 282.4 901.5 278.4 903.4 279.7C905.4 280.9 908.6 292.1 907.6 294.1C906.5 296.2 895.6 297.8 894.1 298.2 M890 291 L907.6 294.1 M890 298.2C891.1 299.2 900.3 305.4 900.3 306.5C900.3 307.6 891.1 308.3 890 308.6 M935.4 284.8C937.2 285.3 949.2 288 951.9 289C954.7 289.9 959.1 291.9 960.2 293.1C961.3 294.2 962 298.6 962.3 299.3 M947.8 301.3C948.7 300.8 954.5 296.4 956.1 296.2C957.7 295.9 961.6 298.9 962.3 299.3 M947.8 301.3C947.8 301.8 947.1 304.8 947.8 305.5C948.5 306.2 953.3 307.3 954 307.5 M978.8 290C980.4 290.9 990.3 296.2 993.2 298.2C996.2 300.3 1002.2 306.5 1005.6 308.6C1009 310.6 1020.5 314.9 1024.2 316.8C1028 318.8 1038 325.1 1039.7 326.1 M987 303.4C986.1 304.5 978.6 312.1 978.8 313.7C979 315.3 988 317.4 989.1 317.9 M1008.7 303.4C1009.8 303.1 1017.5 300 1018 300.3C1018.6 300.6 1014.3 305.8 1013.9 306.5 M1083.1 254.9C1081.9 255.6 1072.4 260.2 1072.7 261.1C1073.1 262 1084.7 262.9 1086.2 263.1 M1095.5 261.1C1096.2 262 1102.7 267.5 1102.7 269.3C1102.7 271.2 1097.3 276.9 1095.5 277.6C1093.6 278.3 1087.2 275.8 1086.2 275.5 M1060.3 195C1060.2 196.4 1059.9 205.1 1059.3 207.4C1058.7 209.7 1055.8 213.6 1055.2 215.6C1054.6 217.7 1054.3 224.2 1054.2 226C1054 227.8 1054.2 231.5 1054.2 232.2 M1063.4 195C1063.6 196.4 1064 204.9 1064.5 207.4C1064.9 209.9 1065.8 215.1 1067.6 217.7C1069.4 220.3 1078.3 229.1 1081 231.1C1083.7 233.2 1089.5 235.2 1092.4 236.3C1095.2 237.4 1105.2 240.9 1106.8 241.5"/></g></defs>
<use href="#tw" class="rd ta"/><use href="#tw" class="rd tb"/>
<use href="#rds" class="rd ra"/><use href="#rds" class="rd rb"/>
<defs><g id="rts"><path d="M785 652.5C786.6 654.7 798.2 666.2 800 672.5C801.8 678.8 801.8 700.4 801.5 710C801.2 719.6 799.3 749 797.5 760C795.7 771 788 800.6 785 810C782 819.4 771.4 839 770 845C768.6 851 770.3 861.1 772.5 865C774.7 868.9 787 879.5 790 880C793 880.5 798.4 873.3 800 870C801.6 866.7 804.2 856.6 805 850C805.8 843.4 805.3 815.8 807.5 810C809.7 804.2 820 798.3 825 797.5C830 796.7 848.9 800 852.5 802.5C856.1 805 854.5 816.7 857.5 820C860.5 823.3 872 831.3 880 832.5C888 833.7 918.5 830.2 930 831C941.5 831.8 975.6 841.2 985 840C994.4 838.8 1009.8 821.1 1015 820C1020.2 818.9 1030.3 826.7 1032.5 830C1034.7 833.3 1034.7 847.8 1035 850 M795 710C797.2 710.3 811.7 709.8 815 712.5C818.3 715.2 822.2 731.5 825 735C827.8 738.5 835 743.5 840 744C845 744.5 865.9 738.2 870 740C874.1 741.8 879.4 755 877.5 760C875.6 765 853.6 781.1 852.5 785C851.4 788.9 865.9 791.1 867.5 795C869.1 798.9 867.5 817.2 867.5 820 M1065 692.5C1066.7 695 1074 710 1080 715C1086 720 1114.2 738 1120 737.5C1125.8 737 1131.1 715.2 1132.5 710C1133.9 704.8 1136.1 691.1 1132.5 690C1128.9 688.9 1103.6 698.9 1100 700 M1120 737.5 L1035 835 M1132.5 690C1137.7 687.5 1173.7 670.5 1180 667.5C1186.3 664.5 1187.2 661.9 1190 662.5C1192.8 663.1 1202.3 671.4 1205.1 673.1C1207.8 674.8 1213.9 677.5 1215 678 M1190 662.5C1192.2 662.5 1207.4 663.3 1209.7 662.5C1212 661.7 1206.7 657.9 1211.2 654.9C1215.7 651.9 1241.9 639 1250.6 635.2C1259.3 631.4 1282.4 623.7 1289.9 620.8C1297.4 617.9 1319.7 612.8 1318.7 608.7C1317.7 604.6 1289.4 588.9 1280.9 583.7C1272.4 578.5 1249 565.4 1241.5 561C1234 556.6 1215.9 545.5 1212.7 543.6 M1209.7 662.5C1210.5 662.2 1211.1 660.2 1217.3 659.5C1223.5 658.8 1260.2 655.4 1265.7 655.7C1271.2 656 1267.7 660.4 1267.2 662.5C1266.7 664.6 1262.4 671.9 1261.2 674.6C1260 677.3 1259.6 683.9 1256.6 686.7C1253.6 689.5 1236.4 698.5 1233.9 700 M1233.9 700C1236.2 703.9 1250.5 729 1255 735C1259.5 741 1272 750 1275 755C1278 760 1278.4 774.8 1282.5 780C1286.6 785.2 1309.8 795.4 1312.5 802.5C1315.2 809.6 1311.1 835.4 1307.5 845C1303.9 854.6 1281.9 880.6 1280 890C1278.1 899.4 1291.1 923.4 1290 930C1288.9 936.6 1276.6 946.1 1270 950C1263.4 953.9 1242.7 970.5 1230 965C1217.3 959.5 1165.5 905.5 1155 900C1144.5 894.5 1147.1 911.6 1135 915C1122.9 918.4 1058.2 930.5 1045 931C1031.8 931.5 1018.3 921.2 1015 920 M1203.6 530.7C1202.9 531.2 1201 531.8 1197.6 535.3C1194.2 538.8 1174.2 557.3 1172.5 562.5C1170.8 567.7 1178.9 578.2 1182.5 582.5C1186.1 586.8 1201.8 599.5 1205.1 601.9C1208.4 604.3 1211.9 603.9 1212.7 604.2 M1035 850C1035.5 852.2 1040.3 865.6 1040 870C1039.7 874.4 1031.5 886.1 1032 890C1032.5 893.9 1043.6 900.5 1045 905C1046.4 909.5 1045 928.1 1045 931 M1015 820C1015.5 822.8 1020.5 840.4 1020 845C1019.5 849.6 1009.8 858.1 1010 862C1010.2 865.9 1022.5 876.4 1022 880C1021.5 883.6 1010.2 890 1005 895C999.8 900 976.6 921.7 975 925C973.4 928.3 986.1 927.2 990 925C993.9 922.8 1007.8 907.2 1010 905 M1022 820C1020.9 822.2 1011.3 835.8 1012 840C1012.7 844.2 1024.9 854.7 1028 858C1031.1 861.3 1037.6 867.6 1040 870C1042.4 872.4 1051.1 877.2 1050 880C1048.9 882.8 1032.2 893.4 1030 895 M880 832.5C885.5 832.9 918.5 834.5 930 836C941.5 837.5 976 843.1 985 846C994 848.9 1009 860.2 1012 862"/></g></defs>
<use href="#rts" fill="none" stroke="#f3e3bd" stroke-width="2.5" stroke-linecap="round" stroke-linejoin="round"/><use href="#rts" fill="none" stroke="#bdb6bd" stroke-width="1.4" stroke-dasharray="1.4 1.2"/>
<path d="M800 675 L852.5 679 L900 650 L920 622.5 L1019.6 536.5 L1071 535 M877.5 760 L935 695 L985 659 L1065 692.5" fill="none" stroke="#dcc9a0" stroke-width="2.6" stroke-dasharray="7 2.5" stroke-linejoin="round"/>
<path d="M800 675 L852.5 679 L900 650 L920 622.5 L1019.6 536.5 L1071 535 M877.5 760 L935 695 L985 659 L1065 692.5" fill="none" stroke="#f0a060" stroke-width=".6" stroke-dasharray="7 2.5" stroke-linejoin="round"/>
<path d="M1423 901.5L1455 1042.5L1557 1021L1528 883.5" fill="none" stroke="#ff2d2d" stroke-width="1"/>
<g class="xl"><use href="#X" x="1098.8" y="535.1"/><use href="#X" x="1204.7" y="629.7"/><use href="#X" x="1178.4" y="654.8"/><use href="#X" x="1189.7" y="661.7"/><use href="#X" x="1241.7" y="612.8"/><use href="#X" x="1268" y="628.5"/><use href="#X" x="1291.9" y="619.1"/><use href="#X" x="1259.3" y="596.5"/><use href="#X" x="1199.7" y="558.3"/><use href="#X" x="1212.7" y="543.6"/><use href="#X" x="1209.7" y="534.5"/><use href="#X" x="1218.8" y="541.3"/><use href="#X" x="1241.5" y="558"/><use href="#X" x="1257" y="566.5"/><use href="#X" x="1280.5" y="579"/><use href="#X" x="1309.5" y="590"/><use href="#X" x="1317" y="592.5"/><use href="#X" x="1344.5" y="597.5"/><use href="#X" x="1356" y="600"/><use href="#X" x="1383" y="602.5"/><use href="#X" x="1471" y="605"/><use href="#X" x="1523" y="601.5"/><use href="#X" x="1538" y="607.5"/><use href="#X" x="1544.5" y="614"/><use href="#X" x="1562" y="632.5"/><use href="#X" x="1573" y="637.5"/><use href="#X" x="1581" y="637.5"/><use href="#X" x="1594.5" y="632.5"/><use href="#X" x="1607" y="631"/><use href="#X" x="1626" y="636"/><use href="#X" x="1595.5" y="660"/><use href="#X" x="1584.5" y="712.5"/><use href="#X" x="1652" y="774"/><use href="#X" x="1638.5" y="796"/><use href="#X" x="1604.5" y="835"/><use href="#X" x="1584.5" y="839"/><use href="#X" x="1574.5" y="862.5"/><use href="#X" x="1575.5" y="877.5"/><use href="#X" x="1567" y="895"/><use href="#X" x="1469.5" y="915"/><use href="#X" x="1391" y="933.5"/><use href="#X" x="1378" y="950"/><use href="#X" x="1385.5" y="990"/><use href="#X" x="1350.5" y="1012.5"/><use href="#X" x="1331" y="996"/><use href="#X" x="1263.5" y="1020"/><use href="#X" x="1227" y="1033"/><use href="#X" x="1129" y="1009"/><use href="#X" x="1118.5" y="1006"/><use href="#X" x="1107.5" y="1000"/><use href="#X" x="1101" y="1010"/><use href="#X" x="1097.5" y="1004"/><use href="#X" x="1076.5" y="995"/><use href="#X" x="1047.5" y="997.5"/><use href="#X" x="1025" y="998.5"/><use href="#X" x="1015" y="995"/><use href="#X" x="992.5" y="981.5"/><use href="#X" x="960" y="957.5"/><use href="#X" x="957.5" y="937.5"/><use href="#X" x="965" y="917.5"/><use href="#X" x="1005" y="886.5"/><use href="#X" x="987.5" y="875"/><use href="#X" x="965" y="862.5"/><use href="#X" x="911.5" y="848.5"/><use href="#X" x="892.5" y="850"/><use href="#X" x="877.5" y="856.5"/><use href="#X" x="848.5" y="856.5"/><use href="#X" x="840" y="842.5"/><use href="#X" x="822.5" y="849"/><use href="#X" x="807.5" y="852.5"/><use href="#X" x="807.5" y="872.5"/><use href="#X" x="800" y="890"/><use href="#X" x="750" y="926.5"/><use href="#X" x="714" y="945"/><use href="#X" x="692.5" y="952.5"/><use href="#X" x="677.5" y="951.5"/><use href="#X" x="642.5" y="938.5"/><use href="#X" x="632.5" y="930"/><use href="#X" x="626" y="910"/><use href="#X" x="631" y="882.5"/><use href="#X" x="645" y="852.5"/><use href="#X" x="651.5" y="827.5"/><use href="#X" x="645" y="802"/><use href="#X" x="635" y="787.5"/><use href="#X" x="733.5" y="682.6"/><use href="#X" x="746.2" y="679.4"/><use href="#X" x="764.9" y="660.1"/><use href="#X" x="769.6" y="657.9"/><use href="#X" x="806.1" y="657.3"/><use href="#X" x="809.9" y="648"/><use href="#X" x="838.9" y="604"/><use href="#X" x="897.9" y="627.4"/><use href="#X" x="917.6" y="622.7"/><use href="#X" x="1019.6" y="536.5"/><use href="#X" x="1566.5" y="170.4"/><use href="#X" x="1598.1" y="176"/><use href="#X" x="1604.4" y="178.2"/><use href="#X" x="1624.7" y="175.6"/><use href="#X" x="1629.3" y="178.1"/><use href="#X" x="1637.8" y="182.4"/><use href="#X" x="1588.3" y="200.5"/><use href="#X" x="1583.4" y="203.2"/><use href="#X" x="1579.8" y="200.7"/><use href="#X" x="1577" y="194.9"/><use href="#X" x="1581.5" y="185.6"/><use href="#X" x="1589.4" y="186.4"/><use href="#X" x="1592.1" y="187.3"/><use href="#X" x="1600.1" y="195.1"/><use href="#X" x="1596.9" y="202.6"/><use href="#X" x="1581.2" y="205.9"/><use href="#X" x="1570.1" y="194.5"/><use href="#X" x="1576.1" y="185.1"/><use href="#X" x="1589.5" y="181.1"/><use href="#X" x="1594" y="184.7"/><use href="#X" x="1545.3" y="200.1"/><use href="#X" x="1545.9" y="207.6"/><use href="#X" x="1544.7" y="216.2"/><use href="#X" x="1554.1" y="225.7"/><use href="#X" x="1557.4" y="228"/><use href="#X" x="1568.6" y="241"/><use href="#X" x="1577" y="248.5"/><use href="#X" x="1603.7" y="243.1"/><use href="#X" x="1553.7" y="222.7"/><use href="#X" x="1558.7" y="224.5"/><use href="#X" x="1585" y="207.8"/><use href="#X" x="1589.6" y="212.5"/><use href="#X" x="1594" y="220.8"/><use href="#X" x="1597.7" y="226"/><use href="#X" x="1600.2" y="227.5"/><use href="#X" x="1570.1" y="215.2"/><use href="#X" x="1580.2" y="217.5"/><use href="#X" x="1591.3" y="217.5"/><use href="#X" x="1599.3" y="215.2"/><use href="#X" x="1601" y="207.6"/><use href="#X" x="1624" y="230.6"/><use href="#X" x="1615.7" y="246.2"/><use href="#X" x="1615.4" y="246.6"/><use href="#X" x="1622.7" y="256"/><use href="#X" x="1620.9" y="260.5"/><use href="#X" x="1622.4" y="261.7"/><use href="#X" x="1622.2" y="264.9"/><use href="#X" x="1615.8" y="265.3"/><use href="#X" x="1615.4" y="269.3"/><use href="#X" x="1611.1" y="267.2"/><use href="#X" x="1623.1" y="267"/><use href="#X" x="1626.9" y="267.4"/><use href="#X" x="1642" y="266.2"/><use href="#X" x="1647.1" y="262.3"/><use href="#X" x="1641.9" y="215.4"/><use href="#X" x="1645.7" y="222.7"/><use href="#X" x="1647" y="227.8"/><use href="#X" x="1656" y="246.6"/><use href="#X" x="1695.5" y="293.1"/><use href="#X" x="1714.5" y="303.8"/><use href="#X" x="1706.1" y="238.3"/><use href="#X" x="1712.8" y="232.9"/><use href="#X" x="1684.6" y="213.1"/><use href="#X" x="1694.8" y="208.7"/><use href="#X" x="1714.5" y="205.4"/><use href="#X" x="1718.1" y="206.9"/><use href="#X" x="1740.1" y="206"/><use href="#X" x="1749.2" y="221.2"/><use href="#X" x="1754.3" y="222.4"/><use href="#X" x="1740.4" y="206.4"/><use href="#X" x="1756.2" y="223.8"/><use href="#X" x="1767.1" y="226.8"/><use href="#X" x="1779.1" y="232.8"/><use href="#X" x="1772.3" y="230.1"/><use href="#X" x="1776" y="233"/><use href="#X" x="1785.7" y="279.9"/><use href="#X" x="1784.3" y="285"/><use href="#X" x="1786.3" y="304.3"/><use href="#X" x="1784" y="308.2"/><use href="#X" x="1777.8" y="315.5"/><use href="#X" x="1738.7" y="261.6"/><use href="#X" x="1743" y="259.9"/><use href="#X" x="1747.6" y="260.4"/><use href="#X" x="1766.6" y="268"/><use href="#X" x="1781.5" y="265.7"/><use href="#X" x="1717.9" y="261"/><use href="#X" x="1729.5" y="259.8"/><use href="#X" x="1764.7" y="244.8"/><use href="#X" x="1765.1" y="252.8"/><use href="#X" x="1764.4" y="266.1"/><use href="#X" x="1751" y="282.1"/><use href="#X" x="1748.3" y="295.1"/><use href="#X" x="1748.1" y="311.6"/><use href="#X" x="1748.1" y="317.7"/><use href="#X" x="1750.7" y="326.2"/><use href="#X" x="1751.1" y="327.5"/><use href="#X" x="1752.6" y="343.5"/><use href="#X" x="1750.2" y="347.9"/><use href="#X" x="1749.6" y="351"/><use href="#X" x="1751.4" y="353.1"/><use href="#X" x="1749" y="361"/><use href="#X" x="1768.2" y="298.5"/><use href="#X" x="1770.5" y="306.3"/><use href="#X" x="1770.6" y="306.5"/><use href="#X" x="1774.7" y="316.3"/><use href="#X" x="1771.1" y="326.8"/><use href="#X" x="1767.8" y="329.4"/><use href="#X" x="1763.5" y="336.2"/><use href="#X" x="1759.3" y="342.1"/><use href="#X" x="1541.8" y="331.1"/><use href="#X" x="1543.7" y="334.7"/><use href="#X" x="1547.2" y="336.3"/><use href="#X" x="1565.6" y="338.6"/><use href="#X" x="1586.5" y="337.9"/><use href="#X" x="1593.7" y="340.9"/><use href="#X" x="1478.8" y="338.1"/><use href="#X" x="1492.9" y="339.6"/><use href="#X" x="1502.2" y="341.7"/><use href="#X" x="1477.2" y="360.3"/><use href="#X" x="1530.8" y="342.4"/><use href="#X" x="1529.6" y="344.5"/><use href="#X" x="1537.9" y="362.8"/><use href="#X" x="1542.7" y="386.2"/><use href="#X" x="1544.6" y="385.7"/><use href="#X" x="1511.6" y="381.5"/><use href="#X" x="1514.2" y="385.9"/><use href="#X" x="1517.6" y="388.5"/><use href="#X" x="1521" y="392.9"/><use href="#X" x="1529.4" y="391.3"/><use href="#X" x="1533.2" y="392.3"/><use href="#X" x="1554.4" y="357.5"/><use href="#X" x="1561.7" y="368.8"/><use href="#X" x="1574.3" y="386.5"/><use href="#X" x="1580.4" y="400.8"/><use href="#X" x="1556.4" y="387.6"/><use href="#X" x="1563" y="387.7"/><use href="#X" x="1565.6" y="392.4"/><use href="#X" x="1570.2" y="387.1"/><use href="#X" x="1560.8" y="364.9"/><use href="#X" x="1571.1" y="362.7"/><use href="#X" x="1580.7" y="361.1"/><use href="#X" x="1593.1" y="362.1"/><use href="#X" x="1593.3" y="376.9"/><use href="#X" x="1594.7" y="380.3"/><use href="#X" x="1595.7" y="378.8"/><use href="#X" x="1591" y="413.8"/><use href="#X" x="1594.3" y="417.1"/><use href="#X" x="1611.7" y="419.6"/><use href="#X" x="1618.4" y="417.6"/><use href="#X" x="1648.6" y="415.3"/><use href="#X" x="1660.8" y="413.2"/><use href="#X" x="1680" y="397.5"/><use href="#X" x="1688.5" y="379.9"/><use href="#X" x="1694" y="375.7"/><use href="#X" x="1695.2" y="356.7"/><use href="#X" x="1752" y="387.4"/><use href="#X" x="1752.3" y="398.7"/><use href="#X" x="1755.6" y="448.7"/><use href="#X" x="1756.8" y="457.7"/></g>
<g class="xx"><use href="#X" x="849.7" y="284.9"/><use href="#X" x="957.5" y="257"/><use href="#X" x="972.5" y="242"/><use href="#X" x="1010.4" y="246.5"/><use href="#X" x="1015.4" y="260"/><use href="#X" x="1068.3" y="276"/><use href="#X" x="1091.3" y="290.8"/><use href="#X" x="1115" y="269"/><use href="#X" x="1032.4" y="308.8"/><use href="#X" x="1066.3" y="341.7"/><use href="#X" x="1043.4" y="362.7"/><use href="#X" x="996.4" y="363.7"/><use href="#X" x="970.5" y="384.7"/><use href="#X" x="960.5" y="390.6"/><use href="#X" x="938.6" y="401.6"/><use href="#X" x="807.8" y="325.8"/><use href="#X" x="809" y="322"/><use href="#X" x="791.9" y="341.7"/><use href="#X" x="806.8" y="357.7"/><use href="#X" x="795.8" y="364.7"/><use href="#X" x="793.8" y="373.7"/><use href="#X" x="801.8" y="392.6"/><use href="#X" x="795.8" y="397.6"/><use href="#X" x="796.8" y="418.6"/><use href="#X" x="803.8" y="447.5"/><use href="#X" x="817.8" y="457.5"/><use href="#X" x="824.8" y="452.5"/><use href="#X" x="831.8" y="447.5"/><use href="#X" x="851.7" y="460.5"/><use href="#X" x="881.7" y="447.5"/><use href="#X" x="883.7" y="446.5"/><use href="#X" x="1009.4" y="336.8"/><use href="#X" x="1013.4" y="339.8"/><use href="#X" x="1084.3" y="310.8"/><use href="#X" x="1085.3" y="318.8"/><use href="#X" x="1081.3" y="334.8"/><use href="#X" x="1087.3" y="335.8"/><use href="#X" x="1083" y="326"/><use href="#X" x="802.5" y="392.5"/><use href="#X" x="796.2" y="418.8"/><use href="#X" x="820" y="468.1"/><use href="#X" x="810.6" y="481.9"/><use href="#X" x="796.9" y="493.1"/><use href="#X" x="761.9" y="501.9"/><use href="#X" x="736.2" y="493.8"/><use href="#X" x="727.5" y="505.6"/><use href="#X" x="733.8" y="512.5"/><use href="#X" x="743.8" y="511.9"/><use href="#X" x="783.8" y="505.6"/><use href="#X" x="790.6" y="508.1"/><use href="#X" x="810.6" y="513.8"/><use href="#X" x="824.4" y="498.1"/><use href="#X" x="851.2" y="460.6"/><use href="#X" x="862.5" y="451.9"/><use href="#X" x="880" y="446.2"/><use href="#X" x="885" y="445.6"/><use href="#X" x="882.5" y="453.8"/><use href="#X" x="873.8" y="460"/><use href="#X" x="873.1" y="466.2"/><use href="#X" x="872" y="463"/><use href="#X" x="870" y="497.5"/><use href="#X" x="883.8" y="507.5"/><use href="#X" x="876.9" y="516.9"/><use href="#X" x="892.5" y="535"/><use href="#X" x="942.5" y="511.9"/><use href="#X" x="950" y="493.8"/><use href="#X" x="939.4" y="401.2"/><use href="#X" x="933.8" y="406.9"/><use href="#X" x="910" y="417.5"/><use href="#X" x="952.5" y="425.6"/><use href="#X" x="964.4" y="430"/><use href="#X" x="981.9" y="425"/><use href="#X" x="998.8" y="433.8"/><use href="#X" x="1013.1" y="468.8"/><use href="#X" x="1006.9" y="483.1"/><use href="#X" x="995.6" y="487.5"/><use href="#X" x="986.9" y="486.9"/><use href="#X" x="975.6" y="488.8"/><use href="#X" x="958.8" y="477.5"/><use href="#X" x="943.1" y="511.9"/><use href="#X" x="960.6" y="541.2"/><use href="#X" x="966.9" y="539.4"/><use href="#X" x="973.8" y="550.6"/><use href="#X" x="966.2" y="558.8"/><use href="#X" x="968.8" y="560.6"/><use href="#X" x="965" y="561.9"/><use href="#X" x="962.5" y="566.9"/><use href="#X" x="967" y="557"/><use href="#X" x="883.1" y="552.5"/><use href="#X" x="891.9" y="535"/><use href="#X" x="870" y="496.9"/><use href="#X" x="1002.5" y="523.8"/><use href="#X" x="1005" y="511.9"/><use href="#X" x="1028.8" y="512.5"/><use href="#X" x="1025.6" y="526.9"/><use href="#X" x="1018.1" y="535"/><use href="#X" x="1058.1" y="534.4"/><use href="#X" x="1084.4" y="534.4"/><use href="#X" x="1098.1" y="534.4"/><use href="#X" x="861.4" y="586.2"/><use href="#X" x="872.6" y="597.4"/><use href="#X" x="895.1" y="598.3"/><use href="#X" x="901.6" y="602.1"/><use href="#X" x="914.8" y="602.1"/><use href="#X" x="942.9" y="589"/><use href="#X" x="941.9" y="574.9"/><use href="#X" x="763" y="570.2"/><use href="#X" x="784.6" y="582.4"/><use href="#X" x="749.9" y="589.9"/><use href="#X" x="773.3" y="617.1"/><use href="#X" x="736.8" y="634.9"/><use href="#X" x="759.3" y="643.3"/><use href="#X" x="766" y="657.5"/><use href="#X" x="770" y="657.5"/><use href="#X" x="774" y="657.5"/><use href="#X" x="778" y="657.5"/><use href="#X" x="782" y="657.5"/><use href="#X" x="786" y="657"/><use href="#X" x="709.7" y="708.8"/><use href="#X" x="688" y="733"/><use href="#X" x="663" y="759"/><use href="#X" x="1204.7" y="629.7"/><use href="#X" x="1178.4" y="654.8"/><use href="#X" x="1189.7" y="661.7"/><use href="#X" x="1241.7" y="612.8"/><use href="#X" x="1268" y="628.5"/><use href="#X" x="1273.7" y="624.7"/><use href="#X" x="1291.9" y="619.1"/><use href="#X" x="1259.3" y="596.5"/><use href="#X" x="1256" y="599"/><use href="#X" x="1199.7" y="558.3"/><use href="#X" x="1212.9" y="543.2"/><use href="#X" x="1216" y="538"/><use href="#X" x="1559.8" y="179.2"/><use href="#X" x="1563.9" y="174.3"/><use href="#X" x="1571.5" y="174"/><use href="#X" x="1577" y="172.6"/><use href="#X" x="1580.9" y="173.6"/><use href="#X" x="1588.2" y="176.6"/><use href="#X" x="1592.1" y="178.5"/><use href="#X" x="1609.4" y="176"/><use href="#X" x="1617.7" y="175.5"/><use href="#X" x="1620.7" y="176.4"/><use href="#X" x="1632.8" y="178.3"/><use href="#X" x="1639.2" y="184.1"/><use href="#X" x="1644.3" y="185.9"/><use href="#X" x="1646.5" y="188.4"/><use href="#X" x="1650.2" y="194.4"/><use href="#X" x="1593.6" y="195"/><use href="#X" x="1592.8" y="197.6"/><use href="#X" x="1590" y="202.4"/><use href="#X" x="1578.7" y="198.8"/><use href="#X" x="1574.9" y="195.9"/><use href="#X" x="1576.5" y="192.3"/><use href="#X" x="1577.4" y="188"/><use href="#X" x="1583.5" y="184"/><use href="#X" x="1595.2" y="190.3"/><use href="#X" x="1588" y="206"/><use href="#X" x="1571.6" y="201.3"/><use href="#X" x="1581.2" y="183.6"/><use href="#X" x="1546.6" y="194.1"/><use href="#X" x="1542.1" y="210.7"/><use href="#X" x="1541.4" y="221.3"/><use href="#X" x="1546.9" y="226.2"/><use href="#X" x="1550.2" y="223.8"/><use href="#X" x="1560.5" y="233.3"/><use href="#X" x="1567" y="236.7"/><use href="#X" x="1573" y="243.6"/><use href="#X" x="1579.4" y="249.8"/><use href="#X" x="1585.8" y="249.8"/><use href="#X" x="1591.2" y="245.3"/><use href="#X" x="1597.2" y="243.3"/><use href="#X" x="1544.2" y="207.9"/><use href="#X" x="1547.3" y="210.4"/><use href="#X" x="1548.1" y="214.8"/><use href="#X" x="1551.2" y="218.4"/><use href="#X" x="1554.7" y="223.9"/><use href="#X" x="1559.8" y="230"/><use href="#X" x="1562" y="230.7"/><use href="#X" x="1567.1" y="231.9"/><use href="#X" x="1589.5" y="214.9"/><use href="#X" x="1591" y="217.5"/><use href="#X" x="1602.1" y="232.3"/><use href="#X" x="1605.1" y="236.4"/><use href="#X" x="1548.4" y="212.9"/><use href="#X" x="1556.8" y="214.6"/><use href="#X" x="1573.4" y="218.8"/><use href="#X" x="1602.8" y="214"/><use href="#X" x="1609.1" y="211.9"/><use href="#X" x="1619.3" y="211.9"/><use href="#X" x="1629.8" y="215.5"/><use href="#X" x="1637" y="218.1"/><use href="#X" x="1601.9" y="212.8"/><use href="#X" x="1609.3" y="215.1"/><use href="#X" x="1615.3" y="219"/><use href="#X" x="1620" y="223.5"/><use href="#X" x="1623.6" y="229.2"/><use href="#X" x="1628.6" y="234"/><use href="#X" x="1631.4" y="238.8"/><use href="#X" x="1614.6" y="244.3"/><use href="#X" x="1619.5" y="250.9"/><use href="#X" x="1619" y="265.5"/><use href="#X" x="1607.8" y="271.8"/><use href="#X" x="1604" y="272.1"/><use href="#X" x="1609.9" y="271.6"/><use href="#X" x="1613.4" y="268.7"/><use href="#X" x="1617" y="269.1"/><use href="#X" x="1630.5" y="268.5"/><use href="#X" x="1634.8" y="269.7"/><use href="#X" x="1634.2" y="267.5"/><use href="#X" x="1637" y="265.4"/><use href="#X" x="1649.4" y="260"/><use href="#X" x="1650.8" y="258.6"/><use href="#X" x="1654.7" y="257"/><use href="#X" x="1643.7" y="220.6"/><use href="#X" x="1648.6" y="234.4"/><use href="#X" x="1656.4" y="238.7"/><use href="#X" x="1655.2" y="245.1"/><use href="#X" x="1657.8" y="252.5"/><use href="#X" x="1657" y="257.4"/><use href="#X" x="1659.4" y="259.3"/><use href="#X" x="1686.2" y="210.3"/><use href="#X" x="1685.7" y="215.3"/><use href="#X" x="1689.8" y="219.3"/><use href="#X" x="1695.1" y="221.1"/><use href="#X" x="1695" y="225"/><use href="#X" x="1655.6" y="266.2"/><use href="#X" x="1665.1" y="270.6"/><use href="#X" x="1675.4" y="275.4"/><use href="#X" x="1682.2" y="278.1"/><use href="#X" x="1687.4" y="283.8"/><use href="#X" x="1704.4" y="299.2"/><use href="#X" x="1723.7" y="305.3"/><use href="#X" x="1722.2" y="237"/><use href="#X" x="1719.6" y="241.3"/><use href="#X" x="1715.5" y="243.7"/><use href="#X" x="1712.6" y="242.1"/><use href="#X" x="1708.7" y="240.6"/><use href="#X" x="1708.2" y="235.4"/><use href="#X" x="1716" y="230.8"/><use href="#X" x="1721.6" y="234.9"/><use href="#X" x="1697.4" y="209.4"/><use href="#X" x="1704.2" y="209.1"/><use href="#X" x="1710.3" y="205.9"/><use href="#X" x="1722" y="205.8"/><use href="#X" x="1727.2" y="205.5"/><use href="#X" x="1735.3" y="204"/><use href="#X" x="1742.1" y="210.3"/><use href="#X" x="1746.5" y="213.7"/><use href="#X" x="1740.4" y="207.4"/><use href="#X" x="1742.6" y="211.8"/><use href="#X" x="1742.6" y="210.3"/><use href="#X" x="1745.8" y="215.1"/><use href="#X" x="1762.1" y="226.2"/><use href="#X" x="1768.8" y="230.2"/><use href="#X" x="1770.9" y="232"/><use href="#X" x="1773.6" y="231.2"/><use href="#X" x="1784.4" y="234.4"/><use href="#X" x="1787.3" y="238"/><use href="#X" x="1789.5" y="235.6"/><use href="#X" x="1793.3" y="236.8"/><use href="#X" x="1768.4" y="230.4"/><use href="#X" x="1771.1" y="228.7"/><use href="#X" x="1775.4" y="229.5"/><use href="#X" x="1795.3" y="245.5"/><use href="#X" x="1793.9" y="252.9"/><use href="#X" x="1794.7" y="261.7"/><use href="#X" x="1794.4" y="266.4"/><use href="#X" x="1789.2" y="271.3"/><use href="#X" x="1780.6" y="281.2"/><use href="#X" x="1784.3" y="287.7"/><use href="#X" x="1790.4" y="295.6"/><use href="#X" x="1780.4" y="308.1"/><use href="#X" x="1780.1" y="322.1"/><use href="#X" x="1782.2" y="326.3"/><use href="#X" x="1787.4" y="330.7"/><use href="#X" x="1727.5" y="253.5"/><use href="#X" x="1728.7" y="255.8"/><use href="#X" x="1754.7" y="262.9"/><use href="#X" x="1757.9" y="265.7"/><use href="#X" x="1762" y="268.1"/><use href="#X" x="1772.7" y="265.5"/><use href="#X" x="1779" y="263.8"/><use href="#X" x="1784.9" y="263.3"/><use href="#X" x="1716.4" y="258.1"/><use href="#X" x="1720.1" y="257.9"/><use href="#X" x="1724" y="258.7"/><use href="#X" x="1725.1" y="258.4"/><use href="#X" x="1767.3" y="249.2"/><use href="#X" x="1767.8" y="259.1"/><use href="#X" x="1763.8" y="272.2"/><use href="#X" x="1762.7" y="276.4"/><use href="#X" x="1752.5" y="281.8"/><use href="#X" x="1743.3" y="283.1"/><use href="#X" x="1744.8" y="289.9"/><use href="#X" x="1745.6" y="300.7"/><use href="#X" x="1748.8" y="306.8"/><use href="#X" x="1748.3" y="312.8"/><use href="#X" x="1749.7" y="331.3"/><use href="#X" x="1750.5" y="334.4"/><use href="#X" x="1773.2" y="321.4"/><use href="#X" x="1766.1" y="333"/><use href="#X" x="1762.5" y="341.7"/><use href="#X" x="1757.4" y="345.4"/><use href="#X" x="1752.1" y="346.9"/><use href="#X" x="1728.2" y="323.7"/><use href="#X" x="1734.9" y="323.3"/><use href="#X" x="1742.3" y="321.1"/><use href="#X" x="1546.1" y="313.4"/><use href="#X" x="1551.4" y="312.4"/><use href="#X" x="1556.8" y="311.4"/><use href="#X" x="1563.3" y="311.5"/><use href="#X" x="1573.4" y="311.7"/><use href="#X" x="1585.1" y="310.3"/><use href="#X" x="1596.7" y="310.8"/><use href="#X" x="1537.9" y="327.5"/><use href="#X" x="1555.5" y="336.1"/><use href="#X" x="1558.6" y="337.9"/><use href="#X" x="1574.6" y="339"/><use href="#X" x="1581" y="339.1"/><use href="#X" x="1471.5" y="338.3"/><use href="#X" x="1515.3" y="342.8"/><use href="#X" x="1467.2" y="350.6"/><use href="#X" x="1471.1" y="353.4"/><use href="#X" x="1529.5" y="348.5"/><use href="#X" x="1535.1" y="353.2"/><use href="#X" x="1531.4" y="357.1"/><use href="#X" x="1537.6" y="362.1"/><use href="#X" x="1534.9" y="366.6"/><use href="#X" x="1535.8" y="369.5"/><use href="#X" x="1541.9" y="376.9"/><use href="#X" x="1543.6" y="381.4"/><use href="#X" x="1508.7" y="379.5"/><use href="#X" x="1512.4" y="386.3"/><use href="#X" x="1526.9" y="391.6"/><use href="#X" x="1545.7" y="344.4"/><use href="#X" x="1550.2" y="351.2"/><use href="#X" x="1549.5" y="355.3"/><use href="#X" x="1558.1" y="360"/><use href="#X" x="1566.6" y="371.3"/><use href="#X" x="1570" y="374"/><use href="#X" x="1572.2" y="379.8"/><use href="#X" x="1574.9" y="391"/><use href="#X" x="1576.2" y="394.6"/><use href="#X" x="1556.6" y="390.3"/><use href="#X" x="1567.9" y="392.3"/><use href="#X" x="1572.6" y="390.6"/><use href="#X" x="1586" y="360.5"/><use href="#X" x="1599.7" y="360.2"/><use href="#X" x="1590.7" y="374.8"/><use href="#X" x="1595.5" y="376.3"/><use href="#X" x="1594.8" y="372.4"/><use href="#X" x="1593.1" y="372.4"/><use href="#X" x="1581.8" y="403.1"/><use href="#X" x="1583.4" y="406.9"/><use href="#X" x="1597.9" y="416.8"/><use href="#X" x="1599.6" y="419.4"/><use href="#X" x="1605.2" y="419.8"/><use href="#X" x="1615.3" y="419.8"/><use href="#X" x="1622.4" y="415.9"/><use href="#X" x="1625.8" y="416.5"/><use href="#X" x="1628.6" y="416.1"/><use href="#X" x="1636.7" y="415.5"/><use href="#X" x="1642.2" y="416.7"/><use href="#X" x="1655.8" y="416.1"/><use href="#X" x="1656.7" y="419.4"/><use href="#X" x="1668" y="409.4"/><use href="#X" x="1676.2" y="403.5"/><use href="#X" x="1682.1" y="392.3"/><use href="#X" x="1685.5" y="385.2"/><use href="#X" x="1695.6" y="367.7"/><use href="#X" x="1700.5" y="359.8"/><use href="#X" x="1703.6" y="355.3"/><use href="#X" x="1652" y="335.5"/><use href="#X" x="1689.7" y="349.4"/><use href="#X" x="1750.4" y="373.7"/><use href="#X" x="1750.7" y="381.8"/><use href="#X" x="1752.2" y="393.3"/><use href="#X" x="1752" y="402.1"/><use href="#X" x="1754.7" y="406.5"/><use href="#X" x="1753.6" y="410.8"/><use href="#X" x="1754.5" y="413.4"/><use href="#X" x="1754.9" y="413.6"/><use href="#X" x="1757.2" y="430.9"/><use href="#X" x="1757.3" y="473.1"/></g>
<path d="M915.4 220.4l7.6 7.6M915.4 228l7.6 -7.6M919.7 220.1l8.1 8.1M919.7 228.2l8.1 -8.1M908.2 217.6l8.2 8.2M908.2 225.8l8.2 -8.2M917.4 223.2l4.9 4.9M917.4 228l4.9 -4.9M913.9 216.4l6.6 6.6M913.9 223l6.6 -6.6M915.3 215l5.3 5.3M915.3 220.3l5.3 -5.3M910.2 222l7.5 7.5M910.2 229.5l7.5 -7.5M910 222.2l5 5M910 227.2l5 -5M916.2 216.4l4.4 4.4M916.2 220.8l4.4 -4.4M917.9 216.8l5.3 5.3M917.9 222l5.3 -5.3M922.2 222.6l5.6 5.6M922.2 228.1l5.6 -5.6M919.4 218.8l7.1 7.1M919.4 225.9l7.1 -7.1M909.1 222.4l7.2 7.2M909.1 229.6l7.2 -7.2M922.1 222.7l5.6 5.6M922.1 228.3l5.6 -5.6M913.9 216.5l5 5M913.9 221.5l5 -5M910.1 216.8l6.8 6.8M910.1 223.6l6.8 -6.8M907.9 220.7l5.8 5.8M907.9 226.5l5.8 -5.8M911.5 221.7l6.3 6.3M911.5 228l6.3 -6.3M911.8 218.2l7.2 7.2M911.8 225.4l7.2 -7.2M907.8 224l4.5 4.5M907.8 228.5l4.5 -4.5M919.1 222.9l4.5 4.5M919.1 227.3l4.5 -4.5M917 217.4l6.7 6.7M917 224.2l6.7 -6.7M911.8 215.4l5.1 5.1M911.8 220.5l5.1 -5.1M917.5 215.6l7.4 7.4M917.5 223l7.4 -7.4M921.6 223.1l5.8 5.8M921.6 228.9l5.8 -5.8M912 218.5l7.5 7.5M912 226l7.5 -7.5M908.1 220.4l7.6 7.6M908.1 228l7.6 -7.6M915.7 213.7l8.2 8.2M915.7 221.9l8.2 -8.2M910.1 217.1l6.8 6.8M910.1 224l6.8 -6.8M917.5 216.5l8.1 8.1M917.5 224.6l8.1 -8.1M915.1 217.5l5.7 5.7M915.1 223.1l5.7 -5.7M912.8 215.7l5 5M912.8 220.7l5 -5M918.2 223.9l5 5M918.2 229l5 -5M906.6 223.1l6.5 6.5M906.6 229.6l6.5 -6.5M1058.6 214.2l6.8 6.8M1058.6 221l6.8 -6.8M1061.4 217.4l6.1 6.1M1061.4 223.5l6.1 -6.1M1054.3 224.1l4.5 4.5M1054.3 228.7l4.5 -4.5M1058.8 222.9l4.9 4.9M1058.8 227.9l4.9 -4.9M1060.1 223.4l6.9 6.9M1060.1 230.3l6.9 -6.9M1061 212.8l6.1 6.1M1061 219l6.1 -6.1M1055.1 222.7l5.6 5.6M1055.1 228.3l5.6 -5.6M1056.6 223.6l7.8 7.8M1056.6 231.4l7.8 -7.8M1062.3 217.2l6.4 6.4M1062.3 223.6l6.4 -6.4M1060.9 217.9l5.6 5.6M1060.9 223.5l5.6 -5.6M1059.3 213.5l5.9 5.9M1059.3 219.4l5.9 -5.9M1062.9 223.5l6.9 6.9M1062.9 230.4l6.9 -6.9M1059.9 216.5l4.8 4.8M1059.9 221.3l4.8 -4.8M1055.4 220.7l7.9 7.9M1055.4 228.6l7.9 -7.9M1056.4 221l7.5 7.5M1056.4 228.5l7.5 -7.5M1059.6 219.4l7.4 7.4M1059.6 226.9l7.4 -7.4M1057.6 220.9l5.5 5.5M1057.6 226.4l5.5 -5.5M1057.7 220.9l7.2 7.2M1057.7 228.1l7.2 -7.2M1055.4 223.3l7 7M1055.4 230.3l7 -7M1060 211.4l6.6 6.6M1060 217.9l6.6 -6.6M1056.4 220.1l6.3 6.3M1056.4 226.4l6.3 -6.3M1060.6 219.1l7.6 7.6M1060.6 226.7l7.6 -7.6M1056.8 219.2l7.4 7.4M1056.8 226.5l7.4 -7.4M1060.5 215.2l7.8 7.8M1060.5 222.9l7.8 -7.8M1060.7 219.3l8.3 8.3M1060.7 227.6l8.3 -8.3M1062.2 218l6.5 6.5M1062.2 224.5l6.5 -6.5M1054 221.3l8.1 8.1M1054 229.5l8.1 -8.1M1057.8 219.8l7.3 7.3M1057.8 227.1l7.3 -7.3M1060.1 213l7.5 7.5M1060.1 220.5l7.5 -7.5M1059.3 220.1l6.1 6.1M1059.3 226.2l6.1 -6.1M1059.1 221.1l6.9 6.9M1059.1 228l6.9 -6.9M1061.3 212.3l5 5M1061.3 217.4l5 -5M1058.6 220.3l5.3 5.3M1058.6 225.6l5.3 -5.3M1061 220.4l4.6 4.6M1061 225l4.6 -4.6M1060.1 215.1l4.6 4.6M1060.1 219.7l4.6 -4.6M1057.6 216.1l5.1 5.1M1057.6 221.2l5.1 -5.1M1058.5 211.8l6.3 6.3M1058.5 218.1l6.3 -6.3M1057.4 219.1l6.8 6.8M1057.4 225.8l6.8 -6.8M1056.3 224l4.4 4.4M1056.3 228.4l4.4 -4.4M1058.9 215.1l6 6M1058.9 221.1l6 -6M998 342l5.9 5.9M998 347.9l5.9 -5.9M998.5 340.6l4.8 4.8M998.5 345.4l4.8 -4.8M1000.9 337.2l6.7 6.7M1000.9 343.9l6.7 -6.7M1004.6 341.8l6.1 6.1M1004.6 347.9l6.1 -6.1M1003.2 340.3l5.9 5.9M1003.2 346.2l5.9 -5.9M998.3 339.5l6.7 6.7M998.3 346.2l6.7 -6.7M1004.6 342.8l6.8 6.8M1004.6 349.6l6.8 -6.8M1000.6 343.3l4.4 4.4M1000.6 347.7l4.4 -4.4" stroke="#ff0000" stroke-width=".8" fill="none" opacity=".9"/>
<path d="M866 345l5 6m-2 -8l4 7M874 362l5 6m-2-8l4 7M998 305l6 5m-3-7l5 6M806 424l4 5m-1-7l4 6M893 470l3 3m2-6l3 3m3 2l3 3m2 4l3 3m-9 2l3 3m4 3l3 3" stroke="#f00" stroke-width="1.5" fill="none"/>
<circle class="pt" cx="908.6" cy="337" r="3.7"/>
<circle class="pt" cx="937" cy="452" r="3.7"/>
<circle class="pt" cx="1205" cy="532.5" r="3.7"/>
<circle class="pt" cx="1215" cy="678" r="3.7"/>
<circle class="pt" cx="1035" cy="874" r="3.7"/>
<circle class="pt" cx="1721" cy="565" r="3.7"/>
<text class="lb" x="912.5" y="331" font-size="15.8" font-style="italic" textLength="85.5" lengthAdjust="spacingAndGlyphs">Swellendam</text>
<text class="lb" x="941" y="447" font-size="14.5" textLength="45" lengthAdjust="spacingAndGlyphs">Railton</text>
<text class="lb" x="1208" y="527.4" font-size="11.8" textLength="207" lengthAdjust="spacingAndGlyphs">Bontebok National Park Entrance Gate</text>
<text class="lb" x="1217" y="672.6" font-size="11.8" textLength="227" lengthAdjust="spacingAndGlyphs">Bontebok National Park Reception &amp; Shop</text>
<text class="lb" x="1040" y="870" font-size="10.3" textLength="129" lengthAdjust="spacingAndGlyphs">Lang Elsies Kraal Rest Camp</text>
<text class="lb" x="1726" y="560" font-size="15.8" font-style="italic" textLength="105" lengthAdjust="spacingAndGlyphs">Buffeljagsrivier</text>
</svg></div><div id="status">
<style>.st{top:6px;height:18px;line-height:18px;font-size:13px;white-space:nowrap}.bx{position:absolute;background:#fff;border:1px solid #a3a3a3;box-shadow:inset 0 1px 1px #d0d0d0}.ib{position:absolute;width:20px;height:19px;border:1px solid #9d9d9d;background:#e6e6e6}</style>
<span class="abs st" style="left:7px;color:#000;">Validation finished.</span>
<span class="abs st" style="left:955px;color:#1414e6;text-decoration:underline;">There is a new plugin available</span>
<div class="ib" style="left:1143px;top:6.5px"><svg width="18" height="17" viewBox="0 0 18 17"><path d="M5 3c2-2 5-1 6 1l2 5c.5 2-1 4-3 4c-2.5 0-3.5-1-4-3z" fill="#ddd" stroke="#222" stroke-width="1.3"/><path d="M4 2l7 11M8 1.5l1 5" stroke="#222" stroke-width="1.2"/><circle cx="9.5" cy="10.5" r="1.5" fill="none" stroke="#222"/><path d="M13 3l1.5-1.5M14.5 6h1.5" stroke="#555" stroke-width=".7"/></svg></div>
<span class="abs st" style="left:1172px;color:#000;">Coordinate:</span>
<div class="bx" style="left:1249px;top:6.5px;width:300px;height:19px"></div>
<span class="abs st" style="left:1249px;color:#000;width:300px;text-align:center;">20.4945,-34.0787</span>
<span class="abs st" style="left:1559px;color:#000;">Scale</span>
<div class="bx" style="left:1604px;top:10px;width:94px;height:15px;border-radius:0 4px 4px 0;box-shadow:none"></div>
<div class="abs" style="left:1683px;top:11px;width:1px;height:13px;background:#c6c6c6"></div>
<div class="abs" style="left:1687px;top:16.5px;width:0;height:0;border-top:4.5px solid #444;border-left:3px solid transparent;border-right:3px solid transparent"></div>
<span class="abs st" style="left:1606px;color:#000;top:9px;font-size:13.5px;">1:19951</span>
<div class="ib" style="left:1704px;top:6.5px"><svg width="18" height="17" viewBox="0 0 18 17"><path d="M3 15.5c4-1 9-6 12.5-13.5c-1 6-5 12-12.5 13.5z" fill="#888" stroke="#666" stroke-width=".8"/><circle cx="6" cy="5" r="3.6" fill="none" stroke="#e02020" stroke-width="1.4"/><path d="M3.5 2.5l5 5" stroke="#e02020" stroke-width="1.4"/></svg></div>
<div class="cb" style="left:1730px;top:9px"><svg viewBox="0 0 16 17"><path d="M2.5 9.5l3.3 4.3l7.5-12.6" fill="none" stroke="#141a2a" stroke-width="2.2"/></svg></div>
<span class="abs st" style="left:1748px;color:#000;">Render</span>
<span class="abs st" style="left:1796px;color:#3c3c3c;">EPSG:4326</span>
<div class="ib" style="left:1874px;top:7.5px;height:18px"><svg width="18" height="16" viewBox="0 0 18 16"><circle cx="9" cy="8" r="6.3" fill="#d4d4d4" stroke="#7c7c7c" stroke-width="1.2"/><ellipse cx="9" cy="8" rx="3" ry="6.3" fill="none" stroke="#7c7c7c"/><path d="M2.7 8h12.6M9 1.7v12.6" stroke="#7c7c7c"/></svg></div>
<svg class="abs" style="left:1905px;top:17px" width="14" height="14" viewBox="0 0 14 14"><path d="M13 1L1 13M13 5L5 13M13 9L9 13" stroke="#9a9a9a" stroke-width="1"/></svg>
</div></div>
</body></html>
